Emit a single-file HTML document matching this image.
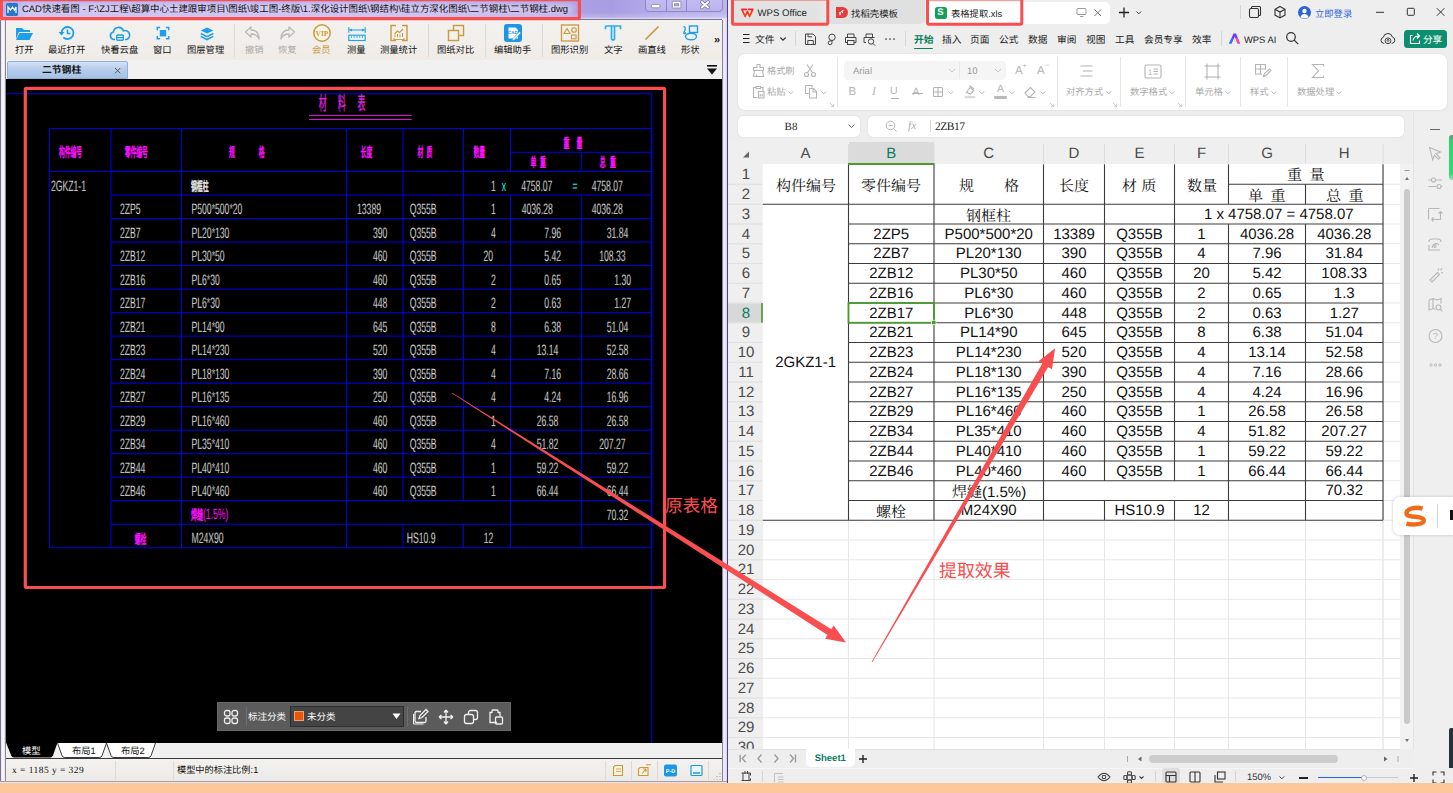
<!DOCTYPE html>
<html lang="zh"><head><meta charset="utf-8"><title>CAD table extraction</title>
<style>
html,body{margin:0;padding:0;overflow:hidden;}
html{width:1453px;height:793px;}
body{text-rendering:geometricPrecision;width:1453px;height:793px;overflow:hidden;position:relative;background:#eee;font-family:"Liberation Sans",sans-serif;}
body div,body svg{position:absolute;}
svg{overflow:visible;}
.t{white-space:nowrap;overflow:visible;}
.cj{font-family:"Liberation Sans","Noto Sans CJK SC",sans-serif;}
.cs{font-family:"Liberation Sans","Noto Serif CJK SC",serif;}
</style></head>
<body>
<div style="left:0px;top:0px;width:728px;height:783px;background:#f1f0f6;"></div>
<div style="left:0px;top:0px;width:728px;height:20px;background:linear-gradient(to right,#b9b1ee,#b7aeed 60%,#a99de2 84%,#b7aeec 92%,#bdb5f0);"></div>
<div style="left:0px;top:12px;width:728px;height:8px;background:linear-gradient(rgba(255,255,255,0),rgba(255,255,255,.18) 60%,rgba(255,255,255,.75));"></div>
<div style="left:18px;top:4px;width:556px;height:11px;background:rgba(255,240,246,.42);filter:blur(3px);border-radius:6px;"></div>
<div style="left:0px;top:20px;width:6px;height:763px;background:linear-gradient(to right,#77767c 0,#77767c 0.9px,#e6e1fa 1.2px,#f6f3ff 2.500px,#fbf9ff 4px,#dcd9e6 4.800px,#8a8990 5.300px,#8a8990 6px);"></div>
<div style="left:721.8px;top:20px;width:6.2px;height:763px;background:linear-gradient(to right,#8a8990 0,#8a8990 .8px,#e4def8 1.300px,#f1edfd 2.800px,#dcd5f4 4.600px,#4a4a68 5.300px,#4a4a68 6.200px);"></div>
<div style="left:6px;top:19.3px;width:715.8px;height:0.8px;background:#7d7b8c;"></div>
<svg style="left:6px;top:3px;" width="12" height="13"><rect x="0" y="0" width="12" height="13" rx="1.5" fill="#2a78c8"/><path d="M2 10V4l2.5 3 2-3 2 3 1.5-3v6" stroke="#fff" stroke-width="1.2" fill="none"/></svg>
<svg class="g" style="left:22px;top:-1.3px;" width="546.01" height="19" role="img"><title>CAD快速看图 - F:\ZJ工程\超算中心土建跟审项目\图纸\竣工图-终版\1.深化设计图纸\钢结构\硅立方深化图纸\二节钢柱\二节钢柱.dwg</title><g fill="#111"><text class="cj" x="19.95" y="12.77" font-size="9.45">快速看图</text><text class="cj" x="87.67" y="12.77" font-size="9.45">工程</text><text class="cj" x="109.19" y="12.77" font-size="9.45">超算中心土建跟审项目</text><text class="cj" x="206.32" y="12.77" font-size="9.45">图纸</text><text class="cj" x="227.85" y="12.77" font-size="9.45">竣工图</text><text class="cj" x="259.35" y="12.77" font-size="9.45">终版</text><text class="cj" x="288.75" y="12.77" font-size="9.45">深化设计图纸</text><text class="cj" x="348.07" y="12.77" font-size="9.45">钢结构</text><text class="cj" x="379.05" y="12.77" font-size="9.45">硅立方深化图纸</text><text class="cj" x="447.83" y="12.77" font-size="9.45">二节钢柱</text><text class="cj" x="488.25" y="12.77" font-size="9.45">二节钢柱</text><text x="0" y="12.77" font-size="9.45">CAD</text><text x="60.38" y="12.77" font-size="9.45">-</text><text x="66.15" y="12.77" font-size="9.45">F:\ZJ</text><text x="106.57" y="12.77" font-size="9.45">\</text><text x="203.7" y="12.77" font-size="9.45">\</text><text x="225.22" y="12.77" font-size="9.45">\</text><text x="256.2" y="12.77" font-size="9.45">-</text><text x="278.24" y="12.77" font-size="9.45">\1.</text><text x="345.45" y="12.77" font-size="9.45">\</text><text x="376.43" y="12.77" font-size="9.45">\</text><text x="445.2" y="12.77" font-size="9.45">\</text><text x="485.63" y="12.77" font-size="9.45">\</text><text x="526.05" y="12.77" font-size="9.45">.dwg</text></g></svg>
<div style="left:644.6px;top:-3px;width:78px;height:14.8px;border:1px solid #8f88bf;border-radius:0 0 4px 4px;background:linear-gradient(#c3bcf2,#bbb3ef);box-sizing:border-box;"></div>
<div style="left:666.3px;top:0px;width:0.8px;height:11px;background:#8f88bf;"></div>
<div style="left:686px;top:0px;width:0.8px;height:11px;background:#8f88bf;"></div>
<svg style="left:645px;top:0px;" width="78" height="12"><rect x="6.500" y="4.500" width="8.500" height="3.300" rx="1.300" fill="#fff" stroke="#77739a" stroke-width=".7"/><rect x="27.300" y="1.300" width="8.600" height="6.700" rx=".6" fill="#fff" stroke="#77739a" stroke-width=".7"/><rect x="29.400" y="3.700" width="4.400" height="2.200" fill="#b4abea" stroke="#77739a" stroke-width=".6"/><path d="M56.800 2l6.300 5.600M63.100 2l-6.300 5.600" stroke="#6d698f" stroke-width="3.300" stroke-linecap="round"/><path d="M56.800 2l6.300 5.600M63.100 2l-6.300 5.600" stroke="#fff" stroke-width="2" stroke-linecap="round"/></svg>
<div style="left:6px;top:20px;width:715.8px;height:40px;background:linear-gradient(#f3f1ee,#efece8);"></div>
<svg style="left:12.0px;top:24px;" width="24" height="18"><path d="M4 4h6l2 2h6v2H7l-3 7z" fill="#1e9fe9"/><path d="M7.5 9H21l-3.5 7H4z" fill="#1e9fe9"/></svg>
<svg class="g" style="left:14.7px;top:42.9px;" width="18.6" height="14" role="img"><title>打开</title><g fill="#111"><text class="cj" x="0" y="10.22" font-size="9.3">打开</text></g></svg>
<svg style="left:55.0px;top:24px;" width="24" height="18"><path d="M6.5 9a6 6 0 1 1 1.8 4.3" fill="none" stroke="#1e9fe9" stroke-width="1.8"/><path d="M3.5 8l3 3.4 3-3.4z" fill="#1e9fe9"/><path d="M12.5 5.5V9.5h3" fill="none" stroke="#1e9fe9" stroke-width="1.6"/></svg>
<svg class="g" style="left:48.4px;top:42.9px;" width="37.2" height="14" role="img"><title>最近打开</title><g fill="#111"><text class="cj" x="0" y="10.22" font-size="9.3">最近打开</text></g></svg>
<svg style="left:107.5px;top:24px;" width="24" height="18"><path d="M7 15.5H6a3.8 3.8 0 0 1-.6-7.5 5.2 5.2 0 0 1 10-1.2A4.3 4.3 0 0 1 18.6 15.5H17" fill="none" stroke="#1e9fe9" stroke-width="1.7"/><rect x="8.7" y="11" width="6.6" height="5.2" rx="1" fill="none" stroke="#1e9fe9" stroke-width="1.4"/><path d="M9 13.6h6" stroke="#1e9fe9" stroke-width="1.2"/></svg>
<svg class="g" style="left:100.9px;top:42.9px;" width="37.2" height="14" role="img"><title>快看云盘</title><g fill="#111"><text class="cj" x="0" y="10.22" font-size="9.3">快看云盘</text></g></svg>
<svg style="left:151.2px;top:24px;" width="24" height="18"><rect x="8.800" y="6" width="6.400" height="6.400" fill="#1e9fe9"/><path d="M6.300 6.300V3.600h2.800M14.900 3.600h2.800v2.700M17.700 12v2.700h-2.800M9.100 14.700H6.300V12" fill="none" stroke="#1e9fe9" stroke-width="1.500"/></svg>
<svg class="g" style="left:153.2px;top:42.9px;" width="18.6" height="14" role="img"><title>窗口</title><g fill="#111"><text class="cj" x="0" y="10.22" font-size="9.3">窗口</text></g></svg>
<svg style="left:194.5px;top:24px;" width="24" height="18"><path d="M12 3.400l6.300 3.100-6.300 3.100-6.300-3.100z" fill="#1e9fe9"/><path d="M5.700 9.500l6.300 3.100 6.300-3.100M5.700 12.400l6.300 3.100 6.300-3.100" fill="none" stroke="#1e9fe9" stroke-width="1.600"/></svg>
<svg class="g" style="left:187.4px;top:42.9px;" width="37.2" height="14" role="img"><title>图层管理</title><g fill="#111"><text class="cj" x="0" y="10.22" font-size="9.3">图层管理</text></g></svg>
<div style="left:234px;top:24px;width:1px;height:33px;background:#dcd8d2;"></div>
<svg style="left:241.0px;top:24px;" width="24" height="18"><path d="M10 3L4.500 8l5.500 5v-3c4 0 6.500 1 8 5 0-6-3-9-8-9z" fill="none" stroke="#b9b9b9" stroke-width="1.300" stroke-linejoin="round"/></svg>
<svg class="g" style="left:244.5px;top:42.9px;" width="18.6" height="14" role="img"><title>撤销</title><g fill="#a9a9a9"><text class="cj" x="0" y="10.22" font-size="9.3">撤销</text></g></svg>
<svg style="left:275.0px;top:24px;" width="24" height="18"><path d="M14 3l5.500 5-5.500 5v-3c-4 0-6.500 1-8 5 0-6 3-9 8-9z" fill="none" stroke="#b9b9b9" stroke-width="1.300" stroke-linejoin="round"/></svg>
<svg class="g" style="left:278.4px;top:42.9px;" width="18.6" height="14" role="img"><title>恢复</title><g fill="#a9a9a9"><text class="cj" x="0" y="10.22" font-size="9.3">恢复</text></g></svg>
<svg style="left:309.5px;top:24px;" width="24" height="18"><circle cx="12" cy="9" r="8.200" fill="#fdf6e6" stroke="#c99a3c" stroke-width="1.500"/><text x="12" y="12" font-size="7.500" font-weight="bold" text-anchor="middle" fill="#c99a3c" font-family="Liberation Serif,serif">VIP</text></svg>
<svg class="g" style="left:312.2px;top:42.9px;" width="18.6" height="14" role="img"><title>会员</title><g fill="#c99a3c"><text class="cj" x="0" y="10.22" font-size="9.3">会员</text></g></svg>
<svg style="left:344.5px;top:24px;" width="24" height="18"><path d="M3.800 3.300v5.400M20.200 3.300v5.400M4.500 6h15" stroke="#1e9fe9" stroke-width="1.100" fill="none"/><path d="M7 4.400L4.300 6 7 7.600zM17 4.400L19.700 6 17 7.600z" fill="#1e9fe9"/><rect x="3.800" y="11.200" width="16.400" height="5.300" fill="#e4f3fd" stroke="#1e9fe9" stroke-width="1.100"/><path d="M6.500 11.500v2.400M9.200 11.500v2.400M12 11.500v2.400M14.800 11.500v2.400M17.500 11.500v2.400" stroke="#1e9fe9" stroke-width=".8"/></svg>
<svg class="g" style="left:346.7px;top:42.9px;" width="18.6" height="14" role="img"><title>测量</title><g fill="#111"><text class="cj" x="0" y="10.22" font-size="9.3">测量</text></g></svg>
<svg style="left:387.0px;top:24px;" width="24" height="18"><path d="M9 1.500H4v15h5M15 1.500h5v15h-5" fill="none" stroke="#c99a3c" stroke-width="1.400"/><path d="M7.500 10l3-3 2 1.500 3.500-3.500" fill="none" stroke="#c99a3c" stroke-width="1.100"/><path d="M8 11v2M10.500 10v3M13 10.500v2.500M15.500 9v4" stroke="#c99a3c" stroke-width="1"/><path d="M7 15.500h10M7 14v3M17 14v3" stroke="#c99a3c" stroke-width=".9"/></svg>
<svg class="g" style="left:380.4px;top:42.9px;" width="37.2" height="14" role="img"><title>测量统计</title><g fill="#111"><text class="cj" x="0" y="10.22" font-size="9.3">测量统计</text></g></svg>
<div style="left:428px;top:24px;width:1px;height:33px;background:#dcd8d2;"></div>
<svg style="left:444.0px;top:24px;" width="24" height="18"><rect x="9.500" y="1.500" width="10" height="10" fill="none" stroke="#c99a3c" stroke-width="1.400"/><rect x="4.500" y="6.500" width="10" height="10" fill="#f3f1ee" stroke="#c99a3c" stroke-width="1.400"/></svg>
<svg class="g" style="left:437.4px;top:42.9px;" width="37.2" height="14" role="img"><title>图纸对比</title><g fill="#111"><text class="cj" x="0" y="10.22" font-size="9.3">图纸对比</text></g></svg>
<div style="left:485px;top:24px;width:1px;height:33px;background:#dcd8d2;"></div>
<svg style="left:501.0px;top:24px;" width="24" height="18"><rect x="3" y="0" width="18" height="18" rx="3" fill="#1e96e4"/><path d="M7.500 3.500h7l2.500 2.500v8.500h-9.500z" fill="#fff"/><text x="11.800" y="9.500" font-size="4.500" font-weight="bold" text-anchor="middle" fill="#1e96e4" font-family="Liberation Sans,sans-serif">CAD</text><path d="M12 14.500l6.500-7 1.500 1.500-6.500 7-2.200.600z" fill="#fff" stroke="#1e96e4" stroke-width=".6"/></svg>
<svg class="g" style="left:494.4px;top:42.9px;" width="37.2" height="14" role="img"><title>编辑助手</title><g fill="#111"><text class="cj" x="0" y="10.22" font-size="9.3">编辑助手</text></g></svg>
<div style="left:542px;top:24px;width:1px;height:33px;background:#dcd8d2;"></div>
<svg style="left:558.0px;top:24px;" width="24" height="18"><rect x="3.500" y="1" width="17" height="16" fill="none" stroke="#c99a3c" stroke-width="1.300"/><path d="M9 4.500l3 5h-6z" fill="none" stroke="#c99a3c" stroke-width="1.100"/><circle cx="16" cy="6" r="2.300" fill="none" stroke="#c99a3c" stroke-width="1.100"/><rect x="13.500" y="11" width="4.500" height="3.800" fill="none" stroke="#c99a3c" stroke-width="1.100"/></svg>
<svg class="g" style="left:551.4px;top:42.9px;" width="37.2" height="14" role="img"><title>图形识别</title><g fill="#111"><text class="cj" x="0" y="10.22" font-size="9.3">图形识别</text></g></svg>
<svg style="left:601.0px;top:24px;" width="24" height="18"><path d="M4.500 2h15v3.200M4.500 2v3.200M10.500 2.300v13.500M13.500 2.300v13.500M10.500 15.800h3" fill="none" stroke="#29aef0" stroke-width="1.700"/></svg>
<svg class="g" style="left:603.7px;top:42.9px;" width="18.6" height="14" role="img"><title>文字</title><g fill="#111"><text class="cj" x="0" y="10.22" font-size="9.3">文字</text></g></svg>
<svg style="left:639.5px;top:24px;" width="24" height="18"><path d="M5.500 15.500L18.500 2.500" stroke="#c99a3c" stroke-width="1.700"/></svg>
<svg class="g" style="left:637.55px;top:42.9px;" width="27.9" height="14" role="img"><title>画直线</title><g fill="#111"><text class="cj" x="0" y="10.22" font-size="9.3">画直线</text></g></svg>
<svg style="left:678.5px;top:24px;" width="24" height="18"><rect x="10.500" y="2" width="8" height="6.500" fill="none" stroke="#1e9fe9" stroke-width="1.400"/><ellipse cx="12" cy="12.500" rx="5.500" ry="3.300" fill="none" stroke="#1e9fe9" stroke-width="1.400"/><path d="M4.500 2.500c2.500 0 2 3.500.5 5.500-1 1.300.5 2.500 2 .5" fill="none" stroke="#1e9fe9" stroke-width="1.300"/></svg>
<svg class="g" style="left:681.2px;top:42.9px;" width="18.6" height="14" role="img"><title>形状</title><g fill="#111"><text class="cj" x="0" y="10.22" font-size="9.3">形状</text></g></svg>
<div class="t" style="left:711px;top:33px;width:12px;height:14px;line-height:14px;font-size:11px;color:#222;text-align:center;font-weight:bold;">»</div>
<div style="left:6px;top:60px;width:715.8px;height:19px;background:#f1f1f1;"></div>
<div style="left:7px;top:61px;width:121px;height:17.5px;background:linear-gradient(#d3e2f6,#b7cdea 45%,#a4c0e6);border:1px solid #8fb0da;box-sizing:border-box;border-radius:2px 2px 0 0;"></div>
<svg class="g" style="left:42.4px;top:61px;" width="39.2" height="17" role="img"><title>二节钢柱</title><g fill="#111"><text class="cj" x="0" y="11.9" font-size="9.8" font-weight="bold">二节钢柱</text></g></svg>
<svg style="left:114px;top:66.5px;" width="8" height="8"><path d="M1 1l5.300 5.300M6.300 1l-5.300 5.300" stroke="#555" stroke-width="1"/></svg>
<svg style="left:706px;top:65px;" width="12" height="10"><path d="M1 .8h10" stroke="#111" stroke-width="1.600"/><path d="M1 3.500h10l-5 6z" fill="#111"/></svg>
<div style="left:6px;top:79px;width:715.8px;height:664px;background:#000;"></div>
<svg style="left:7px;top:79px;" width="715" height="664" viewBox="7 79 715 664" font-family="Liberation Sans,sans-serif"><g stroke="#000" stroke-width=".3"><path d="M7 93.75H651.8M651.8 93.75V743.00M49.5 128.50H651.8M49.5 171.50H651.8M510.5 152.30H651.8M49.5 128.50V547.76M651.8 128.50V547.76M49.5 547.76H651.8M111 195.02H651.8M111 218.53H651.8M111 242.05H651.8M111 265.56H651.8M111 289.08H651.8M111 312.60H651.8M111 336.11H651.8M111 359.63H651.8M111 383.14H651.8M111 406.66H651.8M111 430.18H651.8M111 453.69H651.8M111 477.21H651.8M111 500.72H651.8M111 524.24H651.8M111 128.50V547.76M181.5 128.50V547.76M346.5 128.50V547.76M403 128.50V500.72M403 524.24V547.76M463.5 128.50V500.72M463.5 524.24V547.76M510.5 128.50V171.50M510.5 195.02V547.76M581.7 152.30V171.50M581.7 195.02V547.76" stroke="#0000ea" stroke-width="1" fill="none"/>
<path d="M309 115.500H411.700M309 119.500H411.700" stroke="#e010e0" stroke-width="1.100"/>
<text class="cj" transform="translate(322.7,109.5) scale(0.42,1)" font-size="19" fill="#ee22ee" stroke="#ee22ee" stroke-width=".23" text-anchor="middle">材</text>
<text class="cj" transform="translate(341.7,109.5) scale(0.42,1)" font-size="19" fill="#ee22ee" stroke="#ee22ee" stroke-width=".23" text-anchor="middle">料</text>
<text class="cj" transform="translate(361.5,109.5) scale(0.42,1)" font-size="19" fill="#ee22ee" stroke="#ee22ee" stroke-width=".23" text-anchor="middle">表</text>
<text class="cj" transform="translate(70.5,157.3) scale(0.4304,1)" font-size="13.5" fill="#ff10ff" stroke="#ff10ff" stroke-width=".6" text-anchor="middle">构件编号</text>
<text class="cj" transform="translate(136.3,157.3) scale(0.4304,1)" font-size="13.5" fill="#ff10ff" stroke="#ff10ff" stroke-width=".6" text-anchor="middle">零件编号</text>
<text class="cj" transform="translate(232,157.3) scale(0.4304,1)" font-size="13.5" fill="#ff10ff" stroke="#ff10ff" stroke-width=".6" text-anchor="middle">规</text>
<text class="cj" transform="translate(261.7,157.3) scale(0.4304,1)" font-size="13.5" fill="#ff10ff" stroke="#ff10ff" stroke-width=".6" text-anchor="middle">格</text>
<text class="cj" transform="translate(366.4,157.3) scale(0.4304,1)" font-size="13.5" fill="#ff10ff" stroke="#ff10ff" stroke-width=".6" text-anchor="middle">长度</text>
<text class="cj" transform="translate(420.5,157.3) scale(0.4304,1)" font-size="13.5" fill="#ff10ff" stroke="#ff10ff" stroke-width=".6" text-anchor="middle">材</text>
<text class="cj" transform="translate(429.5,157.3) scale(0.4304,1)" font-size="13.5" fill="#ff10ff" stroke="#ff10ff" stroke-width=".6" text-anchor="middle">质</text>
<text class="cj" transform="translate(479.3,157.3) scale(0.4304,1)" font-size="13.5" fill="#ff10ff" stroke="#ff10ff" stroke-width=".6" text-anchor="middle">数量</text>
<text class="cj" transform="translate(566.5,148.3) scale(0.4304,1)" font-size="13.5" fill="#ff10ff" stroke="#ff10ff" stroke-width=".6" text-anchor="middle">重</text>
<text class="cj" transform="translate(579.5,148.3) scale(0.4304,1)" font-size="13.5" fill="#ff10ff" stroke="#ff10ff" stroke-width=".6" text-anchor="middle">量</text>
<text class="cj" transform="translate(533.5,166.8) scale(0.4304,1)" font-size="13.5" fill="#ff10ff" stroke="#ff10ff" stroke-width=".6" text-anchor="middle">单</text>
<text class="cj" transform="translate(543,166.8) scale(0.4304,1)" font-size="13.5" fill="#ff10ff" stroke="#ff10ff" stroke-width=".6" text-anchor="middle">重</text>
<text class="cj" transform="translate(602.7,166.8) scale(0.4304,1)" font-size="13.5" fill="#ff10ff" stroke="#ff10ff" stroke-width=".6" text-anchor="middle">总</text>
<text class="cj" transform="translate(613,166.8) scale(0.4304,1)" font-size="13.5" fill="#ff10ff" stroke="#ff10ff" stroke-width=".6" text-anchor="middle">重</text>
<text transform="translate(51,190.56) scale(0.575,1)" font-size="15" fill="#ffffff" text-anchor="start">2GKZ1-1</text>
<text class="cj" transform="translate(191,190.56) scale(0.45,1)" font-size="13" fill="#eee" stroke="#eee" stroke-width=".58" text-anchor="start">钢框柱</text>
<text transform="translate(491,190.56) scale(0.575,1)" font-size="15" fill="#ffffff" text-anchor="start">1</text>
<text transform="translate(501.7,190.56) scale(0.575,1)" font-size="15" fill="#18f2f2" stroke="none" text-anchor="start">x</text>
<text transform="translate(521.2,190.56) scale(0.575,1)" font-size="15" fill="#ffffff" text-anchor="start">4758.07</text>
<text transform="translate(572.5,190.56) scale(0.575,1)" font-size="15" fill="#18f2f2" stroke="none" text-anchor="start">=</text>
<text transform="translate(591.7,190.56) scale(0.575,1)" font-size="15" fill="#ffffff" text-anchor="start">4758.07</text>
<text transform="translate(120,214.07) scale(0.575,1)" font-size="15" fill="#ffffff" text-anchor="start">2ZP5</text>
<text transform="translate(191.5,214.07) scale(0.575,1)" font-size="15" fill="#ffffff" text-anchor="start">P500*500*20</text>
<text transform="translate(357,214.07) scale(0.575,1)" font-size="15" fill="#ffffff" text-anchor="start">13389</text>
<text transform="translate(409.7,214.07) scale(0.575,1)" font-size="15" fill="#ffffff" text-anchor="start">Q355B</text>
<text transform="translate(491.0,214.07) scale(0.575,1)" font-size="15" fill="#ffffff" text-anchor="start">1</text>
<text transform="translate(521.7,214.07) scale(0.575,1)" font-size="15" fill="#ffffff" text-anchor="start">4036.28</text>
<text transform="translate(591.7,214.07) scale(0.575,1)" font-size="15" fill="#ffffff" text-anchor="start">4036.28</text>
<text transform="translate(120,237.59) scale(0.575,1)" font-size="15" fill="#ffffff" text-anchor="start">2ZB7</text>
<text transform="translate(191.5,237.59) scale(0.575,1)" font-size="15" fill="#ffffff" text-anchor="start">PL20*130</text>
<text transform="translate(373,237.59) scale(0.575,1)" font-size="15" fill="#ffffff" text-anchor="start">390</text>
<text transform="translate(409.7,237.59) scale(0.575,1)" font-size="15" fill="#ffffff" text-anchor="start">Q355B</text>
<text transform="translate(491.0,237.59) scale(0.575,1)" font-size="15" fill="#ffffff" text-anchor="start">4</text>
<text transform="translate(544.2,237.59) scale(0.575,1)" font-size="15" fill="#ffffff" text-anchor="start">7.96</text>
<text transform="translate(606.7,237.59) scale(0.575,1)" font-size="15" fill="#ffffff" text-anchor="start">31.84</text>
<text transform="translate(120,261.11) scale(0.575,1)" font-size="15" fill="#ffffff" text-anchor="start">2ZB12</text>
<text transform="translate(191.5,261.11) scale(0.575,1)" font-size="15" fill="#ffffff" text-anchor="start">PL30*50</text>
<text transform="translate(373,261.11) scale(0.575,1)" font-size="15" fill="#ffffff" text-anchor="start">460</text>
<text transform="translate(409.7,261.11) scale(0.575,1)" font-size="15" fill="#ffffff" text-anchor="start">Q355B</text>
<text transform="translate(483.5,261.11) scale(0.575,1)" font-size="15" fill="#ffffff" text-anchor="start">20</text>
<text transform="translate(544.2,261.11) scale(0.575,1)" font-size="15" fill="#ffffff" text-anchor="start">5.42</text>
<text transform="translate(599.2,261.11) scale(0.575,1)" font-size="15" fill="#ffffff" text-anchor="start">108.33</text>
<text transform="translate(120,284.62) scale(0.575,1)" font-size="15" fill="#ffffff" text-anchor="start">2ZB16</text>
<text transform="translate(191.5,284.62) scale(0.575,1)" font-size="15" fill="#ffffff" text-anchor="start">PL6*30</text>
<text transform="translate(373,284.62) scale(0.575,1)" font-size="15" fill="#ffffff" text-anchor="start">460</text>
<text transform="translate(409.7,284.62) scale(0.575,1)" font-size="15" fill="#ffffff" text-anchor="start">Q355B</text>
<text transform="translate(491.0,284.62) scale(0.575,1)" font-size="15" fill="#ffffff" text-anchor="start">2</text>
<text transform="translate(544.2,284.62) scale(0.575,1)" font-size="15" fill="#ffffff" text-anchor="start">0.65</text>
<text transform="translate(614.2,284.62) scale(0.575,1)" font-size="15" fill="#ffffff" text-anchor="start">1.30</text>
<text transform="translate(120,308.14) scale(0.575,1)" font-size="15" fill="#ffffff" text-anchor="start">2ZB17</text>
<text transform="translate(191.5,308.14) scale(0.575,1)" font-size="15" fill="#ffffff" text-anchor="start">PL6*30</text>
<text transform="translate(373,308.14) scale(0.575,1)" font-size="15" fill="#ffffff" text-anchor="start">448</text>
<text transform="translate(409.7,308.14) scale(0.575,1)" font-size="15" fill="#ffffff" text-anchor="start">Q355B</text>
<text transform="translate(491.0,308.14) scale(0.575,1)" font-size="15" fill="#ffffff" text-anchor="start">2</text>
<text transform="translate(544.2,308.14) scale(0.575,1)" font-size="15" fill="#ffffff" text-anchor="start">0.63</text>
<text transform="translate(614.2,308.14) scale(0.575,1)" font-size="15" fill="#ffffff" text-anchor="start">1.27</text>
<text transform="translate(120,331.65) scale(0.575,1)" font-size="15" fill="#ffffff" text-anchor="start">2ZB21</text>
<text transform="translate(191.5,331.65) scale(0.575,1)" font-size="15" fill="#ffffff" text-anchor="start">PL14*90</text>
<text transform="translate(373,331.65) scale(0.575,1)" font-size="15" fill="#ffffff" text-anchor="start">645</text>
<text transform="translate(409.7,331.65) scale(0.575,1)" font-size="15" fill="#ffffff" text-anchor="start">Q355B</text>
<text transform="translate(491.0,331.65) scale(0.575,1)" font-size="15" fill="#ffffff" text-anchor="start">8</text>
<text transform="translate(544.2,331.65) scale(0.575,1)" font-size="15" fill="#ffffff" text-anchor="start">6.38</text>
<text transform="translate(606.7,331.65) scale(0.575,1)" font-size="15" fill="#ffffff" text-anchor="start">51.04</text>
<text transform="translate(120,355.17) scale(0.575,1)" font-size="15" fill="#ffffff" text-anchor="start">2ZB23</text>
<text transform="translate(191.5,355.17) scale(0.575,1)" font-size="15" fill="#ffffff" text-anchor="start">PL14*230</text>
<text transform="translate(373,355.17) scale(0.575,1)" font-size="15" fill="#ffffff" text-anchor="start">520</text>
<text transform="translate(409.7,355.17) scale(0.575,1)" font-size="15" fill="#ffffff" text-anchor="start">Q355B</text>
<text transform="translate(491.0,355.17) scale(0.575,1)" font-size="15" fill="#ffffff" text-anchor="start">4</text>
<text transform="translate(536.7,355.17) scale(0.575,1)" font-size="15" fill="#ffffff" text-anchor="start">13.14</text>
<text transform="translate(606.7,355.17) scale(0.575,1)" font-size="15" fill="#ffffff" text-anchor="start">52.58</text>
<text transform="translate(120,378.69) scale(0.575,1)" font-size="15" fill="#ffffff" text-anchor="start">2ZB24</text>
<text transform="translate(191.5,378.69) scale(0.575,1)" font-size="15" fill="#ffffff" text-anchor="start">PL18*130</text>
<text transform="translate(373,378.69) scale(0.575,1)" font-size="15" fill="#ffffff" text-anchor="start">390</text>
<text transform="translate(409.7,378.69) scale(0.575,1)" font-size="15" fill="#ffffff" text-anchor="start">Q355B</text>
<text transform="translate(491.0,378.69) scale(0.575,1)" font-size="15" fill="#ffffff" text-anchor="start">4</text>
<text transform="translate(544.2,378.69) scale(0.575,1)" font-size="15" fill="#ffffff" text-anchor="start">7.16</text>
<text transform="translate(606.7,378.69) scale(0.575,1)" font-size="15" fill="#ffffff" text-anchor="start">28.66</text>
<text transform="translate(120,402.2) scale(0.575,1)" font-size="15" fill="#ffffff" text-anchor="start">2ZB27</text>
<text transform="translate(191.5,402.2) scale(0.575,1)" font-size="15" fill="#ffffff" text-anchor="start">PL16*135</text>
<text transform="translate(373,402.2) scale(0.575,1)" font-size="15" fill="#ffffff" text-anchor="start">250</text>
<text transform="translate(409.7,402.2) scale(0.575,1)" font-size="15" fill="#ffffff" text-anchor="start">Q355B</text>
<text transform="translate(491.0,402.2) scale(0.575,1)" font-size="15" fill="#ffffff" text-anchor="start">4</text>
<text transform="translate(544.2,402.2) scale(0.575,1)" font-size="15" fill="#ffffff" text-anchor="start">4.24</text>
<text transform="translate(606.7,402.2) scale(0.575,1)" font-size="15" fill="#ffffff" text-anchor="start">16.96</text>
<text transform="translate(120,425.72) scale(0.575,1)" font-size="15" fill="#ffffff" text-anchor="start">2ZB29</text>
<text transform="translate(191.5,425.72) scale(0.575,1)" font-size="15" fill="#ffffff" text-anchor="start">PL16*460</text>
<text transform="translate(373,425.72) scale(0.575,1)" font-size="15" fill="#ffffff" text-anchor="start">460</text>
<text transform="translate(409.7,425.72) scale(0.575,1)" font-size="15" fill="#ffffff" text-anchor="start">Q355B</text>
<text transform="translate(491.0,425.72) scale(0.575,1)" font-size="15" fill="#ffffff" text-anchor="start">1</text>
<text transform="translate(536.7,425.72) scale(0.575,1)" font-size="15" fill="#ffffff" text-anchor="start">26.58</text>
<text transform="translate(606.7,425.72) scale(0.575,1)" font-size="15" fill="#ffffff" text-anchor="start">26.58</text>
<text transform="translate(120,449.23) scale(0.575,1)" font-size="15" fill="#ffffff" text-anchor="start">2ZB34</text>
<text transform="translate(191.5,449.23) scale(0.575,1)" font-size="15" fill="#ffffff" text-anchor="start">PL35*410</text>
<text transform="translate(373,449.23) scale(0.575,1)" font-size="15" fill="#ffffff" text-anchor="start">460</text>
<text transform="translate(409.7,449.23) scale(0.575,1)" font-size="15" fill="#ffffff" text-anchor="start">Q355B</text>
<text transform="translate(491.0,449.23) scale(0.575,1)" font-size="15" fill="#ffffff" text-anchor="start">4</text>
<text transform="translate(536.7,449.23) scale(0.575,1)" font-size="15" fill="#ffffff" text-anchor="start">51.82</text>
<text transform="translate(599.2,449.23) scale(0.575,1)" font-size="15" fill="#ffffff" text-anchor="start">207.27</text>
<text transform="translate(120,472.75) scale(0.575,1)" font-size="15" fill="#ffffff" text-anchor="start">2ZB44</text>
<text transform="translate(191.5,472.75) scale(0.575,1)" font-size="15" fill="#ffffff" text-anchor="start">PL40*410</text>
<text transform="translate(373,472.75) scale(0.575,1)" font-size="15" fill="#ffffff" text-anchor="start">460</text>
<text transform="translate(409.7,472.75) scale(0.575,1)" font-size="15" fill="#ffffff" text-anchor="start">Q355B</text>
<text transform="translate(491.0,472.75) scale(0.575,1)" font-size="15" fill="#ffffff" text-anchor="start">1</text>
<text transform="translate(536.7,472.75) scale(0.575,1)" font-size="15" fill="#ffffff" text-anchor="start">59.22</text>
<text transform="translate(606.7,472.75) scale(0.575,1)" font-size="15" fill="#ffffff" text-anchor="start">59.22</text>
<text transform="translate(120,496.27) scale(0.575,1)" font-size="15" fill="#ffffff" text-anchor="start">2ZB46</text>
<text transform="translate(191.5,496.27) scale(0.575,1)" font-size="15" fill="#ffffff" text-anchor="start">PL40*460</text>
<text transform="translate(373,496.27) scale(0.575,1)" font-size="15" fill="#ffffff" text-anchor="start">460</text>
<text transform="translate(409.7,496.27) scale(0.575,1)" font-size="15" fill="#ffffff" text-anchor="start">Q355B</text>
<text transform="translate(491.0,496.27) scale(0.575,1)" font-size="15" fill="#ffffff" text-anchor="start">1</text>
<text transform="translate(536.7,496.27) scale(0.575,1)" font-size="15" fill="#ffffff" text-anchor="start">66.44</text>
<text transform="translate(606.7,496.27) scale(0.575,1)" font-size="15" fill="#ffffff" text-anchor="start">66.44</text>
<text class="cj" transform="translate(191,520.28) scale(0.43,1)" font-size="14" fill="#ff10ff" stroke="#ff10ff" stroke-width=".6" text-anchor="start">焊缝</text>
<text transform="translate(203,519.28) scale(0.575,1)" font-size="15" fill="#ff10ff" stroke="none" text-anchor="start">(1.5%)</text>
<text transform="translate(606.7,519.78) scale(0.575,1)" font-size="15" fill="#ffffff" text-anchor="start">70.32</text>
<text class="cj" transform="translate(140.5,543.8) scale(0.4304,1)" font-size="13.5" fill="#ff10ff" stroke="#ff10ff" stroke-width=".6" text-anchor="middle">螺栓</text>
<text transform="translate(191.5,543.3) scale(0.575,1)" font-size="15" fill="#ffffff" text-anchor="start">M24X90</text>
<text transform="translate(406.7,543.3) scale(0.575,1)" font-size="15" fill="#ffffff" text-anchor="start">HS10.9</text>
<text transform="translate(483.7,543.3) scale(0.575,1)" font-size="15" fill="#ffffff" text-anchor="start">12</text></g></svg>
<div style="left:6px;top:743px;width:715.8px;height:15px;background:#f0f0f0;"></div>
<svg style="left:6px;top:742px;" width="160" height="17"><path d="M0 0.500h51.500l-4.500 13q-.7 2-2.800 2H8q-2.100 0-2.800-2z" fill="#000"/><path d="M51.500 1l4.500 12.500q.7 2 2.800 2h34.500q2.100 0 2.800-2L100.500 1" fill="#fff" stroke="#3a3a3a" stroke-width="1"/><path d="M100.500 1l4.500 12.500q.7 2 2.800 2h34.500q2.100 0 2.800-2L149.500 1" fill="#fff" stroke="#3a3a3a" stroke-width="1"/></svg>
<svg class="g" style="left:22.2px;top:743.5px;" width="18.6" height="14" role="img"><title>模型</title><g fill="#fff"><text class="cj" x="0" y="10.22" font-size="9.3">模型</text></g></svg>
<svg class="g" style="left:71.61px;top:743.5px;" width="23.77" height="14" role="img"><title>布局1</title><g fill="#111"><text class="cj" x="0" y="10.22" font-size="9.3">布局</text><text x="18.6" y="10.22" font-size="9.3">1</text></g></svg>
<svg class="g" style="left:120.61px;top:743.5px;" width="23.77" height="14" role="img"><title>布局2</title><g fill="#111"><text class="cj" x="0" y="10.22" font-size="9.3">布局</text><text x="18.6" y="10.22" font-size="9.3">2</text></g></svg>
<div style="left:6px;top:758px;width:715.8px;height:1px;background:#3a3a3a;"></div>
<div style="left:6px;top:759px;width:715.8px;height:22px;background:linear-gradient(#f3f2f0,#eceae7);"></div>
<div style="left:0px;top:780.8px;width:727px;height:1px;background:#a3a1a8;"></div>
<div style="left:0px;top:781.8px;width:727px;height:1.2px;background:#e6e2f3;"></div>
<div class="t" style="left:12px;top:764.3px;width:90px;height:14px;line-height:14px;font-size:9.5px;color:#111;text-align:left;font-family:'Liberation Serif',serif;letter-spacing:.45px;">x = 1185 y = 329</div>
<div style="left:115px;top:761px;width:1px;height:19px;background:#dddad6;"></div>
<div style="left:173px;top:761px;width:1px;height:19px;background:#dddad6;"></div>
<svg class="g" style="left:177px;top:763px;" width="81.27" height="14" role="img"><title>模型中的标注比例:1</title><g fill="#111"><text class="cj" x="0" y="10.19" font-size="9.2">模型中的标注比例</text><text x="73.6" y="10.19" font-size="9.2">:1</text></g></svg>
<div style="left:604.5px;top:761px;width:1px;height:19px;background:#dddad6;"></div>
<div style="left:630.5px;top:761px;width:1px;height:19px;background:#dddad6;"></div>
<div style="left:656.5px;top:761px;width:1px;height:19px;background:#dddad6;"></div>
<div style="left:708px;top:761px;width:1px;height:19px;background:#dddad6;"></div>
<svg style="left:612px;top:764px;" width="96" height="13"><path d="M3 1.500h7.500v10H1.500V3z" fill="#fbf3e0" stroke="#c99a3c" stroke-width="1.100"/><path d="M4 5h5M4 7.500h5" stroke="#c99a3c" stroke-width=".8"/><path d="M28 3.500h8v8h-9.500V5z" fill="#fbf3e0" stroke="#c99a3c" stroke-width="1.100"/><path d="M30 9.500l4-4.500m0 0h-3m3 0v3" stroke="#c99a3c" stroke-width="1.100" fill="none"/><path d="M34 .8h5" stroke="#c99a3c" stroke-width="1"/><rect x="52" y="0.500" width="13" height="12" rx="2" fill="#1e96e4"/><text x="58.500" y="9" font-size="5.500" font-weight="bold" text-anchor="middle" fill="#fff" font-family="Liberation Sans,sans-serif">P-D</text><rect x="79" y="1.500" width="11" height="10" rx="1" fill="#eaf5fd" stroke="#1e96e4" stroke-width="1.200"/><path d="M81 9h7" stroke="#1e96e4" stroke-width="1.500"/></svg>
<svg style="left:712px;top:771px;" width="9" height="9"><path d="M8 2v1M8 5v1M5 5v1M8 8v.5M5 8v.5M2 8v.5" stroke="#b5b1ad" stroke-width="1.500"/></svg>
<div style="left:217px;top:702px;width:293.5px;height:28.5px;background:#5b5b5b;border:1px solid #6a6a6a;box-sizing:border-box;"></div>
<svg style="left:223px;top:709px;" width="16" height="16"><g fill="none" stroke="#eee" stroke-width="1.300"><rect x="1.500" y="1.500" width="5.500" height="5.500" rx="2"/><rect x="9" y="1.500" width="5.500" height="5.500" rx="2"/><rect x="1.500" y="9" width="5.500" height="5.500" rx="2"/><rect x="9" y="9" width="5.500" height="5.500" rx="2"/></g></svg>
<div style="left:246px;top:707px;width:1px;height:19px;background:#6f6f6f;"></div>
<svg class="g" style="left:248px;top:709px;" width="38" height="15" role="img"><title>标注分类</title><g fill="#fff"><text class="cj" x="0" y="10.79" font-size="9.5">标注分类</text></g></svg>
<div style="left:289.5px;top:706px;width:114px;height:21px;background:#444;border:1px solid #2e2e2e;box-sizing:border-box;"></div>
<div style="left:294px;top:711px;width:10px;height:10px;background:#e8560c;border:1px solid #f3a070;box-sizing:border-box;"></div>
<svg class="g" style="left:307px;top:709px;" width="28.5" height="15" role="img"><title>未分类</title><g fill="#fff"><text class="cj" x="0" y="10.79" font-size="9.5">未分类</text></g></svg>
<svg style="left:392px;top:713px;" width="9" height="7"><path d="M.5 .5h8l-4 5.500z" fill="#fff"/></svg>
<div style="left:407px;top:707px;width:1px;height:19px;background:#6f6f6f;"></div>
<svg style="left:412px;top:708px;" width="94" height="18"><g fill="none" stroke="#f0f0f0" stroke-width="1.300"><path d="M9 3.500H4.500q-1.500 0-1.500 1.500v8q0 1.500 1.500 1.500h8q1.500 0 1.500-1.500V9"/><path d="M7 10.500l1-3 6-6 2 2-6 6z"/><path d="M1.500 6v10h10" stroke-width="1"/><path d="M34 2v14M27 9h14M34 2l-2 2.500M34 2l2 2.500M34 16l-2-2.500M34 16l2-2.500M27 9l2.500-2M27 9l2.500 2M41 9l-2.500-2M41 9l-2.500 2"/><rect x="56.500" y="2.500" width="9" height="9" rx="2"/><rect x="52.500" y="6.500" width="9" height="9" rx="2" fill="#5a5a5a"/><path d="M80 4.500h-2v10h7"/><path d="M80 5V3q0-1 1-1h4q1 0 1 1v2"/><path d="M86 4.500h2V8"/><rect x="83.500" y="9" width="7" height="7"  rx="1"/></g></svg>
<div style="left:728px;top:0px;width:725px;height:783px;background:#eeeeee;"></div>
<div style="left:727px;top:0px;width:1px;height:783px;background:#4b4478;"></div>
<div style="left:731px;top:0px;width:98px;height:25.5px;background:linear-gradient(to right,#e2e2e2 88%,#ececec);"></div>
<svg style="left:740.5px;top:7.5px;" width="13" height="10"><defs><linearGradient id="wg" x1="0" y1="0" x2="0" y2="1"><stop offset="0" stop-color="#ff1f2e"/><stop offset="1" stop-color="#ff4a05"/></linearGradient></defs><path d="M.9 1.300L4.100 8.500 6.400 3.300 8.600 8.500 11.800 1.300M.9 1.300H5.300M7.500 1.300H11.800" fill="none" stroke="url(#wg)" stroke-width="1.700" stroke-linejoin="round" stroke-linecap="round"/></svg>
<div class="t" style="left:757.5px;top:5.7px;width:60px;height:15px;line-height:15px;font-size:9.6px;color:#222;text-align:left;">WPS Office</div>
<div style="left:829px;top:0px;width:96.3px;height:24.3px;background:#e0e0e0;border-radius:0 0 5px 0;"></div>
<svg style="left:835px;top:6px;" width="13" height="13"><path d="M1 1h6.500a5 5 0 0 1 0 11H1z" fill="#e63c3c"/><path d="M5 9.200c0-2.500 1.200-4 3-5-0.600 1.200-.7 2.200-.5 3M5 9.200c.3-1.500-.3-2.600-1-3.200" stroke="#fff" stroke-width="1" fill="none"/></svg>
<svg class="g" style="left:851px;top:5.7px;" width="47" height="15" role="img"><title>找稻壳模板</title><g fill="#222"><text class="cj" x="0" y="10.76" font-size="9.4">找稻壳模板</text></g></svg>
<div style="left:926px;top:1.5px;width:183.5px;height:22.5px;background:#fff;border-radius:5px;"></div>
<div style="left:934.5px;top:6.5px;width:12px;height:12px;background:#12a05c;border-radius:2.500px;"></div>
<div class="t" style="left:934.5px;top:6.5px;width:12px;height:12px;line-height:12px;font-size:9.5px;color:#fff;text-align:center;font-weight:bold;">S</div>
<svg class="g" style="left:951px;top:5.7px;" width="51.15" height="15" role="img"><title>表格提取.xls</title><g fill="#222"><text class="cj" x="0" y="10.72" font-size="9.3">表格提取</text><text x="37.2" y="10.72" font-size="9.3">.xls</text></g></svg>
<svg style="left:1076px;top:7px;" width="12" height="11"><rect x="1" y="1.500" width="9" height="6" rx="1" fill="none" stroke="#999" stroke-width="1"/><path d="M4 9.500h3.500" stroke="#999" stroke-width="1"/></svg>
<svg style="left:1093px;top:7.5px;" width="10" height="10"><path d="M1.500 1.500l6.500 6.500M8 1.500l-6.500 6.500" stroke="#777" stroke-width="1"/></svg>
<svg style="left:1118px;top:6px;" width="26" height="13"><path d="M6 1.500v10M1 6.500h10" stroke="#222" stroke-width="1.300"/><path d="M18.500 5.500l2.300 2.300 2.300-2.300" stroke="#333" stroke-width="1" fill="none"/></svg>
<div style="left:1240px;top:5px;width:1px;height:14px;background:#d2d2d2;"></div>
<svg style="left:1248px;top:5px;" width="40" height="15"><g fill="none" stroke="#333" stroke-width="1.100"><rect x="1.500" y="3.500" width="9" height="9" rx="1.500"/><path d="M3.500 3.500V2.500q0-1 1-1h7q1 0 1 1v7q0 1-1 1h-1"/><path d="M32 1.500l5 2.800v5.800l-5 2.800-5-2.800V4.300z"/><path d="M27 4.300l5 2.800 5-2.800M32 7.100v5.800"/></g></svg>
<svg style="left:1298px;top:5.5px;" width="14" height="14"><circle cx="6.500" cy="6.500" r="6.500" fill="#2d62de"/><circle cx="6.500" cy="5" r="2.200" fill="#fff"/><path d="M2.500 11a4.200 4.200 0 0 1 8 0a6 6 0 0 1-8 0z" fill="#fff"/></svg>
<svg class="g" style="left:1315px;top:5.7px;" width="37.2" height="15" role="img"><title>立即登录</title><g fill="#2d62de"><text class="cj" x="0" y="10.72" font-size="9.3">立即登录</text></g></svg>
<svg style="left:1370px;top:5px;" width="80" height="15"><g fill="none" stroke="#333" stroke-width="1"><path d="M6 7.300h8"/><rect x="37.300" y="3.300" width="7" height="7" rx=".8"/><path d="M66.800 3.200l7.600 7.600M74.400 3.200l-7.600 7.600"/></g></svg>
<svg style="left:742px;top:33px;" width="10" height="11"><path d="M1 1.500h6.500M1 5.500h6.500M1 9.500h6.500" stroke="#222" stroke-width="1.100"/></svg>
<svg class="g" style="left:754.5px;top:31.7px;" width="19.6" height="15" role="img"><title>文件</title><g fill="#222"><text class="cj" x="0" y="10.9" font-size="9.8">文件</text></g></svg>
<svg style="left:779px;top:36.2px;" width="9" height="7"><path d="M1.300 1.500l2.700 2.600 2.700-2.600" stroke="#333" stroke-width="1.150" fill="none"/></svg>
<div style="left:795px;top:31px;width:1px;height:15px;background:#d6d6d6;"></div>
<svg style="left:803px;top:33px;" width="96" height="13"><g fill="none" stroke="#444" stroke-width="1"><path d="M2.500 1h7.500l2.500 2.500v8h-10z"/><path d="M4.800 11.500v-4h5.500v4M5 1v2.800h4"/><circle cx="29" cy="4.300" r="3.200"/><path d="M29 7.500v2.300a1.900 1.900 0 1 1-1.900-1.900h1.900"/><path d="M44.500 4.500v-3.500h6.500v3.500M44.500 9.500h-2v-5h10.500v5h-2"/><rect x="44.500" y="7.500" width="6.500" height="4"/><path d="M63 4.500v-3.500h6.500v3.500M63 9.500h-2v-5h10.500"/><circle cx="68" cy="8.500" r="2.700"/><path d="M70 10.500l2.200 2.200"/></g><g fill="#333"><circle cx="83" cy="6" r=".85"/><circle cx="87" cy="6" r=".85"/><circle cx="91" cy="6" r=".85"/></g></svg>
<div style="left:905px;top:31px;width:1px;height:15px;background:#d6d6d6;"></div>
<svg class="g" style="left:913.7px;top:31.7px;" width="19.6" height="15" role="img"><title>开始</title><g fill="#0a7d5e"><text class="cj" x="0" y="10.9" font-size="9.8" font-weight="bold">开始</text></g></svg>
<svg class="g" style="left:941.8px;top:31.7px;" width="19.4" height="15" role="img"><title>插入</title><g fill="#222"><text class="cj" x="0" y="10.86" font-size="9.7">插入</text></g></svg>
<svg class="g" style="left:970.3px;top:31.7px;" width="19.4" height="15" role="img"><title>页面</title><g fill="#222"><text class="cj" x="0" y="10.86" font-size="9.7">页面</text></g></svg>
<svg class="g" style="left:999.3px;top:31.7px;" width="19.4" height="15" role="img"><title>公式</title><g fill="#222"><text class="cj" x="0" y="10.86" font-size="9.7">公式</text></g></svg>
<svg class="g" style="left:1027.8px;top:31.7px;" width="19.4" height="15" role="img"><title>数据</title><g fill="#222"><text class="cj" x="0" y="10.86" font-size="9.7">数据</text></g></svg>
<svg class="g" style="left:1056.8px;top:31.7px;" width="19.4" height="15" role="img"><title>审阅</title><g fill="#222"><text class="cj" x="0" y="10.86" font-size="9.7">审阅</text></g></svg>
<svg class="g" style="left:1085.8px;top:31.7px;" width="19.4" height="15" role="img"><title>视图</title><g fill="#222"><text class="cj" x="0" y="10.86" font-size="9.7">视图</text></g></svg>
<svg class="g" style="left:1114.8px;top:31.7px;" width="19.4" height="15" role="img"><title>工具</title><g fill="#222"><text class="cj" x="0" y="10.86" font-size="9.7">工具</text></g></svg>
<svg class="g" style="left:1143.6px;top:31.7px;" width="38.8" height="15" role="img"><title>会员专享</title><g fill="#222"><text class="cj" x="0" y="10.86" font-size="9.7">会员专享</text></g></svg>
<svg class="g" style="left:1192.3px;top:31.7px;" width="19.4" height="15" role="img"><title>效率</title><g fill="#222"><text class="cj" x="0" y="10.86" font-size="9.7">效率</text></g></svg>
<div style="left:913.5px;top:47.6px;width:19.3px;height:1.6px;background:#0a7d5e;border-radius:1px;"></div>
<div style="left:1221px;top:31px;width:1px;height:15px;background:#d6d6d6;"></div>
<svg style="left:1228px;top:32px;" width="13" height="13"><path d="M1 11.500L5.500 1.500h2.500l4 10h-2.500l-2.700-7-3.300 7z" fill="#6a3df0"/><path d="M7.500 6.500l2 5h2.500l-2.500-6z" fill="#ff4d8d"/><path d="M1 11.500l2-4.500h2.300l-1.800 4.500z" fill="#2b7bff"/></svg>
<div class="t" style="left:1244px;top:31.700px;width:40px;height:15px;line-height:15px;font-size:9.4px;color:#222;text-align:left;">WPS AI</div>
<svg style="left:1285px;top:31px;" width="15" height="15"><circle cx="6" cy="6" r="4.300" fill="none" stroke="#333" stroke-width="1.200"/><path d="M9.200 9.200l4 4" stroke="#333" stroke-width="1.200"/></svg>
<svg style="left:1380px;top:31px;" width="16" height="15"><path d="M4.300 12.300h-.6a3 3 0 0 1-.4-5.900 4.700 4.700 0 0 1 9.200-.3 3.200 3.200 0 0 1-.3 6.200h-.6" fill="none" stroke="#333" stroke-width="1"/><circle cx="8" cy="9.800" r="2.900" fill="none" stroke="#333" stroke-width=".9"/><path d="M8 11.400v-3M6.700 9.500l1.300-1.300 1.300 1.300" stroke="#333" stroke-width=".9" fill="none"/></svg>
<div style="left:1404px;top:29.5px;width:42.5px;height:18px;background:#0d8f6f;border-radius:3.500px;"></div>
<svg style="left:1408px;top:32px;" width="14" height="13"><path d="M4.500 3.500h-2v8h9v-3" fill="none" stroke="#fff" stroke-width="1.100"/><path d="M5 8.500c.5-3 2.500-4.500 6-4.500M9 1.500l2.500 2.500-2.500 2.500" fill="none" stroke="#fff" stroke-width="1.100"/></svg>
<svg class="g" style="left:1423px;top:31.5px;" width="19.2" height="15" role="img"><title>分享</title><g fill="#fff"><text class="cj" x="0" y="10.83" font-size="9.6">分享</text></g></svg>
<div style="left:737.5px;top:54px;width:709px;height:56px;background:#fff;border-radius:7px;box-shadow:0 0 2px rgba(0,0,0,.12);"></div>
<svg style="left:751px;top:63px;" width="15" height="15"><g fill="none" stroke="#b4b4b4" stroke-width="1.100"><path d="M2.500 7.500v-3h3.500v-3h3v3h3.500v3z"/><path d="M3.500 7.500l-1 6h10l-1-6M5.500 13.500v-2"/></g></svg>
<svg class="g" style="left:767px;top:64px;" width="27.6" height="14" role="img"><title>格式刷</title><g fill="#a8a8a8"><text class="cj" x="0" y="10.19" font-size="9.2">格式刷</text></g></svg>
<svg style="left:803px;top:63px;" width="15" height="15"><g fill="none" stroke="#b4b4b4" stroke-width="1.100"><circle cx="3.500" cy="11.500" r="2"/><circle cx="10.500" cy="11.500" r="2"/><path d="M4.500 9.800L10 1.500M9.500 9.800L4 1.500"/></g></svg>
<svg style="left:751px;top:84px;" width="15" height="15"><g fill="none" stroke="#b4b4b4" stroke-width="1.100"><path d="M5 3.500h-2.500v10h4"/><path d="M5 2.500h4.500v2h-4.500z"/><path d="M9.500 3.500h2.500v3"/><rect x="7.500" y="7.500" width="5.500" height="6.500"/><path d="M9.300 10v2.500M11.200 10v2.500"/></g></svg>
<svg class="g" style="left:767px;top:85px;" width="18.4" height="14" role="img"><title>粘贴</title><g fill="#a8a8a8"><text class="cj" x="0" y="10.19" font-size="9.2">粘贴</text></g></svg>
<svg style="left:787px;top:90px;" width="8" height="6"><path d="M1.500 1.500l2.300 2.300 2.300-2.300" stroke="#b4b4b4" stroke-width="1" fill="none"/></svg>
<svg style="left:804px;top:84px;" width="15" height="15"><g fill="none" stroke="#b4b4b4" stroke-width="1.100"><path d="M4.500 9.500h-3v-8h6.500v2"/><path d="M5.500 4.500h4l3 3v6.500h-7z"/><path d="M9 4.500v3.500h3.500"/></g></svg>
<svg style="left:820px;top:90px;" width="8" height="6"><path d="M1.500 1.500l2.300 2.300 2.300-2.300" stroke="#b4b4b4" stroke-width="1" fill="none"/></svg>
<svg style="left:829px;top:102px;" width="6" height="6"><path d="M1 1l3.500 3.500M4.700 2v2.700H2" stroke="#c4c4c4" stroke-width=".9" fill="none"/></svg>
<div style="left:837px;top:57px;width:1px;height:50px;background:#e6e6e6;"></div>
<div style="left:843.5px;top:61px;width:162.5px;height:18.5px;background:#f5f5f5;border-radius:4px;"></div>
<div style="left:959px;top:62px;width:1px;height:16.5px;background:#e9e9e9;"></div>
<div class="t" style="left:853px;top:64.3px;width:40px;height:15px;line-height:15px;font-size:9.5px;color:#999;text-align:left;">Arial</div>
<svg style="left:948px;top:68px;" width="9" height="6"><path d="M1 1l3 3 3-3" stroke="#c8c8c8" stroke-width="1" fill="none"/></svg>
<div class="t" style="left:967px;top:64.3px;width:20px;height:15px;line-height:15px;font-size:9.5px;color:#999;text-align:left;">10</div>
<svg style="left:994px;top:68px;" width="9" height="6"><path d="M1 1l3 3 3-3" stroke="#c8c8c8" stroke-width="1" fill="none"/></svg>
<div class="t" style="left:1015px;top:64px;width:10px;height:15px;line-height:15px;font-size:11.5px;color:#b4b4b4;text-align:left;">A</div>
<div class="t" style="left:1022.5px;top:60.5px;width:8px;height:10px;line-height:10px;font-size:7.5px;color:#b4b4b4;text-align:left;">+</div>
<div class="t" style="left:1037px;top:64px;width:10px;height:15px;line-height:15px;font-size:11.5px;color:#b4b4b4;text-align:left;">A</div>
<div class="t" style="left:1045px;top:59.5px;width:8px;height:10px;line-height:10px;font-size:7.5px;color:#b4b4b4;text-align:left;">–</div>
<div class="t" style="left:848.5px;top:84px;width:10px;height:16px;line-height:16px;font-size:11.5px;color:#b4b4b4;text-align:left;">B</div>
<div class="t" style="left:869px;top:84px;width:10px;height:16px;line-height:16px;font-size:11.5px;color:#b4b4b4;text-align:center;font-style:italic;font-family:'Liberation Serif',serif;">I</div>
<div class="t" style="left:890px;top:84px;width:10px;height:15px;line-height:15px;font-size:10.5px;color:#b4b4b4;text-align:left;">U</div>
<div style="left:890.5px;top:97.5px;width:8.5px;height:1px;background:#b4b4b4;"></div>
<div class="t" style="left:912.5px;top:84px;width:10px;height:16px;line-height:16px;font-size:10.5px;color:#b4b4b4;text-align:left;">A</div>
<div style="left:912px;top:92.5px;width:10.5px;height:1px;background:#b4b4b4;"></div>
<div style="left:912px;top:95px;width:10.5px;height:1px;background:#fff;"></div>
<svg style="left:932px;top:86px;" width="12" height="12"><g fill="none" stroke="#b4b4b4" stroke-width="1.100"><rect x="1.500" y="1.500" width="9" height="9" rx="1"/><path d="M6 1.500v9M1.500 6h9"/></g></svg>
<svg style="left:947px;top:90px;" width="8" height="6"><path d="M1.500 1.500l2.300 2.300 2.300-2.300" stroke="#b4b4b4" stroke-width="1" fill="none"/></svg>
<svg style="left:963px;top:84px;" width="14" height="15"><g fill="none" stroke="#b4b4b4" stroke-width="1.100"><path d="M3.500 8.500l3.500-5 4 3-3.500 3.500z"/><path d="M6.500 1.500l4.500 3.500"/></g><rect x="1.500" y="12" width="11" height="2.300" rx="1" fill="#d9d9d9"/></svg>
<svg style="left:978px;top:90px;" width="8" height="6"><path d="M1.500 1.500l2.300 2.300 2.300-2.300" stroke="#b4b4b4" stroke-width="1" fill="none"/></svg>
<div class="t" style="left:994.5px;top:82px;width:12px;height:15px;line-height:15px;font-size:10.5px;color:#b4b4b4;text-align:center;">A</div>
<div style="left:994px;top:96px;width:12.5px;height:2.8px;background:#b9b9b9;border-radius:1px;"></div>
<svg style="left:1008px;top:90px;" width="8" height="6"><path d="M1.500 1.500l2.300 2.300 2.300-2.300" stroke="#b4b4b4" stroke-width="1" fill="none"/></svg>
<svg style="left:1023px;top:85px;" width="14" height="14"><g fill="none" stroke="#b4b4b4" stroke-width="1.100"><path d="M2 8l5.500-5.500 4.500 4.500-4.500 4.500h-2.500z"/><path d="M4.500 12.500h8"/></g></svg>
<svg style="left:1039px;top:90px;" width="8" height="6"><path d="M1.500 1.500l2.300 2.300 2.300-2.300" stroke="#b4b4b4" stroke-width="1" fill="none"/></svg>
<svg style="left:1048.5px;top:102px;" width="6" height="6"><path d="M1 1l3.500 3.500M4.700 2v2.700H2" stroke="#c4c4c4" stroke-width=".9" fill="none"/></svg>
<div style="left:1056.5px;top:57px;width:1px;height:50px;background:#e6e6e6;"></div>
<svg style="left:1079px;top:64px;" width="16" height="14"><path d="M1.500 2h12M4 7h9.500M1.500 12h12" stroke="#b4b4b4" stroke-width="1.100"/></svg>
<svg class="g" style="left:1066px;top:85px;" width="37.2" height="14" role="img"><title>对齐方式</title><g fill="#a8a8a8"><text class="cj" x="0" y="10.22" font-size="9.3">对齐方式</text></g></svg>
<svg style="left:1105px;top:90px;" width="8" height="6"><path d="M1.500 1.500l2.300 2.300 2.300-2.300" stroke="#b4b4b4" stroke-width="1" fill="none"/></svg>
<svg style="left:1112px;top:102px;" width="6" height="6"><path d="M1 1l3.500 3.500M4.700 2v2.700H2" stroke="#c4c4c4" stroke-width=".9" fill="none"/></svg>
<div style="left:1120px;top:57px;width:1px;height:50px;background:#e6e6e6;"></div>
<svg style="left:1144px;top:64px;" width="18" height="15"><g fill="none" stroke="#b4b4b4" stroke-width="1.100"><rect x="1" y="1" width="16" height="13" rx="1.500"/><path d="M9.500 5h4.500M9.500 7.500h4.500M9.500 10h4.500"/></g><text x="6" y="10.800" font-size="8" fill="#b4b4b4" text-anchor="middle" font-family="Liberation Sans,sans-serif">1</text></svg>
<svg class="g" style="left:1130px;top:85px;" width="37.2" height="14" role="img"><title>数字格式</title><g fill="#a8a8a8"><text class="cj" x="0" y="10.22" font-size="9.3">数字格式</text></g></svg>
<svg style="left:1168px;top:90px;" width="8" height="6"><path d="M1.500 1.500l2.300 2.300 2.300-2.300" stroke="#b4b4b4" stroke-width="1" fill="none"/></svg>
<svg style="left:1176.5px;top:102px;" width="6" height="6"><path d="M1 1l3.500 3.500M4.700 2v2.700H2" stroke="#c4c4c4" stroke-width=".9" fill="none"/></svg>
<div style="left:1184.5px;top:57px;width:1px;height:50px;background:#e6e6e6;"></div>
<svg style="left:1204px;top:63px;" width="17" height="17"><g fill="none" stroke="#b4b4b4" stroke-width="1.100"><rect x="3" y="3" width="11" height="11"/><path d="M3 .5v2.500h-2.500M14 .5v2.500h2.500M3 16.500v-2.500h-2.500M14 16.500v-2.500h2.500"/></g></svg>
<svg class="g" style="left:1195px;top:85px;" width="27.9" height="14" role="img"><title>单元格</title><g fill="#a8a8a8"><text class="cj" x="0" y="10.22" font-size="9.3">单元格</text></g></svg>
<svg style="left:1223.5px;top:90px;" width="8" height="6"><path d="M1.500 1.500l2.300 2.300 2.300-2.300" stroke="#b4b4b4" stroke-width="1" fill="none"/></svg>
<div style="left:1240px;top:57px;width:1px;height:50px;background:#e6e6e6;"></div>
<svg style="left:1254px;top:63px;" width="19" height="16"><g fill="none" stroke="#b4b4b4" stroke-width="1.100"><path d="M8 11h-6.500v-9.500h10v5"/><path d="M1.500 6h10M6.500 1.500v9.500"/><path d="M9.500 13.500l1-3 5-4.500 1.500 1.500-5 5z"/></g></svg>
<svg class="g" style="left:1250px;top:85px;" width="18.6" height="14" role="img"><title>样式</title><g fill="#a8a8a8"><text class="cj" x="0" y="10.22" font-size="9.3">样式</text></g></svg>
<svg style="left:1269.5px;top:90px;" width="8" height="6"><path d="M1.500 1.500l2.300 2.300 2.300-2.300" stroke="#b4b4b4" stroke-width="1" fill="none"/></svg>
<div style="left:1286.5px;top:57px;width:1px;height:50px;background:#e6e6e6;"></div>
<svg style="left:1310px;top:63px;" width="16" height="16"><path d="M13.500 3.500v-2h-11l6 6.500-6 6.500h11v-2" fill="none" stroke="#b4b4b4" stroke-width="1.100"/></svg>
<svg class="g" style="left:1296.5px;top:85px;" width="37.2" height="14" role="img"><title>数据处理</title><g fill="#a8a8a8"><text class="cj" x="0" y="10.22" font-size="9.3">数据处理</text></g></svg>
<svg style="left:1334.5px;top:90px;" width="8" height="6"><path d="M1.500 1.500l2.300 2.300 2.300-2.300" stroke="#b4b4b4" stroke-width="1" fill="none"/></svg>
<div style="left:737.5px;top:116px;width:122.5px;height:20.5px;background:#fff;border-radius:5px;box-shadow:0 0 1.500px rgba(0,0,0,.15);"></div>
<div class="t" style="left:775px;top:118.5px;width:32px;height:16px;line-height:16px;font-size:11px;color:#222;text-align:center;font-family:'Liberation Serif',serif;">B8</div>
<svg style="left:846.5px;top:123px;" width="10" height="7"><path d="M1.500 1.500l3 3 3-3" stroke="#555" stroke-width=".9" fill="none"/></svg>
<div style="left:868px;top:116px;width:535.5px;height:20.5px;background:#fff;border-radius:5px;box-shadow:0 0 1.500px rgba(0,0,0,.15);"></div>
<svg style="left:885px;top:120px;" width="13" height="13"><circle cx="5.500" cy="5.500" r="4.300" fill="none" stroke="#b5b5b5" stroke-width="1"/><path d="M3.500 5.500h4M8.700 8.700l2.800 2.800" stroke="#b5b5b5" stroke-width="1"/></svg>
<div class="t" style="left:908px;top:118px;width:14px;height:16px;line-height:16px;font-size:11.5px;color:#aaa;text-align:left;font-style:italic;font-family:'Liberation Serif',serif;">fx</div>
<div style="left:929.5px;top:120px;width:1px;height:12px;background:#d6d6d6;"></div>
<div class="t" style="left:935px;top:118.5px;width:50px;height:16px;line-height:16px;font-size:11.5px;color:#222;text-align:left;font-family:'Liberation Serif',serif;letter-spacing:-.5px;">2ZB17</div>
<div style="left:728px;top:142px;width:672px;height:607px;background:#fff;"></div>
<div style="left:728px;top:142px;width:672px;height:22.3px;background:#efefef;"></div>
<div style="left:728px;top:142px;width:34.75px;height:607px;background:#efefef;"></div>
<div style="left:848.5px;top:142px;width:85.5px;height:22.3px;background:#dbdbdb;"></div>
<div style="left:728px;top:303.0px;width:34.75px;height:19.75px;background:#d8d8d8;"></div>
<svg style="left:728px;top:142px;" width="672" height="607" viewBox="728 142 672 607"><path d="M848.5 164.3V749M934 164.3V749M1043.5 164.3V749M1104.5 164.3V749M1174.5 164.3V749M1228.5 164.3V749M1305.5 164.3V749M1383 164.3V749M1383 164.3V749M728 184.25H1400M728 204.25H1400M728 224.0H1400M728 243.75H1400M728 263.5H1400M728 283.25H1400M728 303.0H1400M728 322.75H1400M728 342.5H1400M728 362.25H1400M728 382.0H1400M728 401.75H1400M728 421.5H1400M728 441.25H1400M728 461.0H1400M728 480.75H1400M728 500.5H1400M728 520.25H1400M728 540.0H1400M728 559.75H1400M728 579.5H1400M728 599.25H1400M728 619.0H1400M728 638.75H1400M728 658.5H1400M728 678.25H1400M728 698.0H1400M728 717.75H1400M728 737.5H1400" stroke="#e7e7e7" stroke-width="1" fill="none"/><path d="M848.5 144V163M934 144V163M1043.5 144V163M1104.5 144V163M1174.5 144V163M1228.5 144V163M1305.5 144V163M1383 144V163" stroke="#dcdcdc" stroke-width="1" fill="none"/><rect x="762.75" y="164.3" width="620.25" height="355.95" fill="#fff"/><path d="M762.75 204.25H1383M762.75 520.25H1383M1228.5 184.25H1383M848.5 224.0H1383M848.5 243.75H1383M848.5 263.5H1383M848.5 283.25H1383M848.5 303.0H1383M848.5 322.75H1383M848.5 342.5H1383M848.5 362.25H1383M848.5 382.0H1383M848.5 401.75H1383M848.5 421.5H1383M848.5 441.25H1383M848.5 461.0H1383M848.5 480.75H1383M848.5 500.5H1383M848.5 164.3V520.25M934 164.3V520.25M1043.5 164.3V520.25M1104.5 164.3V480.75M1104.5 500.5V520.25M1174.5 164.3V480.75M1174.5 500.5V520.25M1228.5 164.3V204.25M1228.5 224.0V520.25M1305.5 184.25V204.25M1305.5 224.0V520.25M1383 164.3V520.25" stroke="#3c3c3c" stroke-width="1.100" fill="none"/><path d="M728 184.25H762M728 204.25H762M728 224.0H762M728 243.75H762M728 263.5H762M728 283.25H762M728 303.0H762M728 322.75H762M728 342.5H762M728 362.25H762M728 382.0H762M728 401.75H762M728 421.5H762M728 441.25H762M728 461.0H762M728 480.75H762M728 500.5H762M728 520.25H762M728 540.0H762M728 559.75H762M728 579.5H762M728 599.25H762M728 619.0H762M728 638.75H762M728 658.5H762M728 678.25H762M728 698.0H762M728 717.75H762M728 737.5H762" stroke="#e0e0e0" stroke-width="1" fill="none"/><rect x="848.5" y="303.0" width="85.5" height="19.75" fill="none" stroke="#4a9a30" stroke-width="1.800"/><rect x="931.5" y="320.25" width="4.500" height="4.500" fill="#4a9a30" stroke="#fff" stroke-width=".8"/><path d="M848.0 164.100H934.5" stroke="#4a9a30" stroke-width="2"/><path d="M762 303.0V322.75" stroke="#4a9a30" stroke-width="1.600"/><path d="M743 157.500h6v-6z" fill="#666"/></svg>
<div class="t" style="left:790.625px;top:144px;width:30px;height:20.5px;line-height:20.5px;font-size:15px;color:#4a4a4a;text-align:center;">A</div>
<div class="t" style="left:876.25px;top:144px;width:30px;height:20.5px;line-height:20.5px;font-size:15px;color:#0a7d5e;text-align:center;">B</div>
<div class="t" style="left:973.75px;top:144px;width:30px;height:20.5px;line-height:20.5px;font-size:15px;color:#4a4a4a;text-align:center;">C</div>
<div class="t" style="left:1059.0px;top:144px;width:30px;height:20.5px;line-height:20.5px;font-size:15px;color:#4a4a4a;text-align:center;">D</div>
<div class="t" style="left:1124.5px;top:144px;width:30px;height:20.5px;line-height:20.5px;font-size:15px;color:#4a4a4a;text-align:center;">E</div>
<div class="t" style="left:1186.5px;top:144px;width:30px;height:20.5px;line-height:20.5px;font-size:15px;color:#4a4a4a;text-align:center;">F</div>
<div class="t" style="left:1252.0px;top:144px;width:30px;height:20.5px;line-height:20.5px;font-size:15px;color:#4a4a4a;text-align:center;">G</div>
<div class="t" style="left:1329.25px;top:144px;width:30px;height:20.5px;line-height:20.5px;font-size:15px;color:#4a4a4a;text-align:center;">H</div>
<div class="t" style="left:728px;top:164.9px;width:36px;height:20.5px;line-height:20.5px;font-size:15px;color:#4a4a4a;text-align:center;">1</div>
<div class="t" style="left:728px;top:184.85px;width:36px;height:20.5px;line-height:20.5px;font-size:15px;color:#4a4a4a;text-align:center;">2</div>
<div class="t" style="left:728px;top:204.85px;width:36px;height:19.75px;line-height:19.75px;font-size:15px;color:#4a4a4a;text-align:center;">3</div>
<div class="t" style="left:728px;top:224.6px;width:36px;height:19.75px;line-height:19.75px;font-size:15px;color:#4a4a4a;text-align:center;">4</div>
<div class="t" style="left:728px;top:244.35px;width:36px;height:19.75px;line-height:19.75px;font-size:15px;color:#4a4a4a;text-align:center;">5</div>
<div class="t" style="left:728px;top:264.1px;width:36px;height:19.75px;line-height:19.75px;font-size:15px;color:#4a4a4a;text-align:center;">6</div>
<div class="t" style="left:728px;top:283.85px;width:36px;height:19.75px;line-height:19.75px;font-size:15px;color:#4a4a4a;text-align:center;">7</div>
<div class="t" style="left:728px;top:303.6px;width:36px;height:19.75px;line-height:19.75px;font-size:15px;color:#0a7d5e;text-align:center;">8</div>
<div class="t" style="left:728px;top:323.35px;width:36px;height:19.75px;line-height:19.75px;font-size:15px;color:#4a4a4a;text-align:center;">9</div>
<div class="t" style="left:728px;top:343.1px;width:36px;height:19.75px;line-height:19.75px;font-size:15px;color:#4a4a4a;text-align:center;">10</div>
<div class="t" style="left:728px;top:362.85px;width:36px;height:19.75px;line-height:19.75px;font-size:15px;color:#4a4a4a;text-align:center;">11</div>
<div class="t" style="left:728px;top:382.6px;width:36px;height:19.75px;line-height:19.75px;font-size:15px;color:#4a4a4a;text-align:center;">12</div>
<div class="t" style="left:728px;top:402.35px;width:36px;height:19.75px;line-height:19.75px;font-size:15px;color:#4a4a4a;text-align:center;">13</div>
<div class="t" style="left:728px;top:422.1px;width:36px;height:19.75px;line-height:19.75px;font-size:15px;color:#4a4a4a;text-align:center;">14</div>
<div class="t" style="left:728px;top:441.85px;width:36px;height:19.75px;line-height:19.75px;font-size:15px;color:#4a4a4a;text-align:center;">15</div>
<div class="t" style="left:728px;top:461.6px;width:36px;height:19.75px;line-height:19.75px;font-size:15px;color:#4a4a4a;text-align:center;">16</div>
<div class="t" style="left:728px;top:481.35px;width:36px;height:19.75px;line-height:19.75px;font-size:15px;color:#4a4a4a;text-align:center;">17</div>
<div class="t" style="left:728px;top:501.1px;width:36px;height:19.75px;line-height:19.75px;font-size:15px;color:#4a4a4a;text-align:center;">18</div>
<div class="t" style="left:728px;top:520.85px;width:36px;height:19.75px;line-height:19.75px;font-size:15px;color:#4a4a4a;text-align:center;">19</div>
<div class="t" style="left:728px;top:540.6px;width:36px;height:19.75px;line-height:19.75px;font-size:15px;color:#4a4a4a;text-align:center;">20</div>
<div class="t" style="left:728px;top:560.35px;width:36px;height:19.75px;line-height:19.75px;font-size:15px;color:#4a4a4a;text-align:center;">21</div>
<div class="t" style="left:728px;top:580.1px;width:36px;height:19.75px;line-height:19.75px;font-size:15px;color:#4a4a4a;text-align:center;">22</div>
<div class="t" style="left:728px;top:599.85px;width:36px;height:19.75px;line-height:19.75px;font-size:15px;color:#4a4a4a;text-align:center;">23</div>
<div class="t" style="left:728px;top:619.6px;width:36px;height:19.75px;line-height:19.75px;font-size:15px;color:#4a4a4a;text-align:center;">24</div>
<div class="t" style="left:728px;top:639.35px;width:36px;height:19.75px;line-height:19.75px;font-size:15px;color:#4a4a4a;text-align:center;">25</div>
<div class="t" style="left:728px;top:659.1px;width:36px;height:19.75px;line-height:19.75px;font-size:15px;color:#4a4a4a;text-align:center;">26</div>
<div class="t" style="left:728px;top:678.85px;width:36px;height:19.75px;line-height:19.75px;font-size:15px;color:#4a4a4a;text-align:center;">27</div>
<div class="t" style="left:728px;top:698.6px;width:36px;height:19.75px;line-height:19.75px;font-size:15px;color:#4a4a4a;text-align:center;">28</div>
<div class="t" style="left:728px;top:718.35px;width:36px;height:19.75px;line-height:19.75px;font-size:15px;color:#4a4a4a;text-align:center;">29</div>
<div class="t" style="left:728px;top:738.1px;width:36px;height:19.75px;line-height:19.75px;font-size:15px;color:#4a4a4a;text-align:center;clip-path:inset(0 0 9.1px 0);">30</div>
<svg class="g" style="left:775.62px;top:165.9px;" width="60" height="39.94999999999999" role="img"><title>构件编号</title><g fill="#111"><text class="cs" x="0" y="25.17" font-size="15">构件编号</text></g></svg>
<svg class="g" style="left:861.25px;top:165.9px;" width="60" height="39.94999999999999" role="img"><title>零件编号</title><g fill="#111"><text class="cs" x="0" y="25.17" font-size="15">零件编号</text></g></svg>
<svg class="g" style="left:958.75px;top:165.9px;" width="60" height="39.94999999999999" role="img"><title>规  格</title><g fill="#111"><text class="cs" x="0" y="25.17" font-size="15">规</text><text class="cs" x="45" y="25.17" font-size="15">格</text></g></svg>
<svg class="g" style="left:1059px;top:165.9px;" width="30" height="39.94999999999999" role="img"><title>长度</title><g fill="#111"><text class="cs" x="0" y="25.17" font-size="15">长度</text></g></svg>
<svg class="g" style="left:1122.42px;top:165.9px;" width="34.17" height="39.94999999999999" role="img"><title>材 质</title><g fill="#111"><text class="cs" x="0" y="25.17" font-size="15">材</text><text class="cs" x="19.17" y="25.17" font-size="15">质</text></g></svg>
<svg class="g" style="left:1186.5px;top:165.9px;" width="30" height="39.94999999999999" role="img"><title>数量</title><g fill="#111"><text class="cs" x="0" y="25.17" font-size="15">数量</text></g></svg>
<svg class="g" style="left:1287px;top:165.4px;" width="37.5" height="19.94999999999999" role="img"><title>重 量</title><g fill="#111"><text class="cs" x="0" y="15.17" font-size="15">重</text><text class="cs" x="22.5" y="15.17" font-size="15">量</text></g></svg>
<svg class="g" style="left:1248.25px;top:185.85px;" width="37.5" height="20.0" role="img"><title>单 重</title><g fill="#111"><text class="cs" x="0" y="15.2" font-size="15">单</text><text class="cs" x="22.5" y="15.2" font-size="15">重</text></g></svg>
<svg class="g" style="left:1325.5px;top:185.85px;" width="37.5" height="20.0" role="img"><title>总 重</title><g fill="#111"><text class="cs" x="0" y="15.2" font-size="15">总</text><text class="cs" x="22.5" y="15.2" font-size="15">重</text></g></svg>
<div class="t" style="left:762.75px;top:204.85px;width:85.75px;height:316.0px;line-height:316.0px;font-size:15px;color:#111;text-align:center;">2GKZ1-1</div>
<svg class="g" style="left:966.25px;top:205.85px;" width="45" height="19.75" role="img"><title>钢框柱</title><g fill="#111"><text class="cs" x="0" y="15.07" font-size="15">钢框柱</text></g></svg>
<div class="t" style="left:1174.5px;top:204.85px;width:208.5px;height:19.75px;line-height:19.75px;font-size:15px;color:#111;text-align:center;">1 x 4758.07 = 4758.07</div>
<div class="t" style="left:848.5px;top:224.6px;width:85.5px;height:19.75px;line-height:19.75px;font-size:15px;color:#111;text-align:center;">2ZP5</div>
<div class="t" style="left:934px;top:224.6px;width:109.5px;height:19.75px;line-height:19.75px;font-size:15px;color:#111;text-align:center;">P500*500*20</div>
<div class="t" style="left:1043.5px;top:224.6px;width:61.0px;height:19.75px;line-height:19.75px;font-size:15px;color:#111;text-align:center;">13389</div>
<div class="t" style="left:1104.5px;top:224.6px;width:70.0px;height:19.75px;line-height:19.75px;font-size:15px;color:#111;text-align:center;">Q355B</div>
<div class="t" style="left:1174.5px;top:224.6px;width:54.0px;height:19.75px;line-height:19.75px;font-size:15px;color:#111;text-align:center;">1</div>
<div class="t" style="left:1228.5px;top:224.6px;width:77.0px;height:19.75px;line-height:19.75px;font-size:15px;color:#111;text-align:center;">4036.28</div>
<div class="t" style="left:1305.5px;top:224.6px;width:77.5px;height:19.75px;line-height:19.75px;font-size:15px;color:#111;text-align:center;">4036.28</div>
<div class="t" style="left:848.5px;top:244.35px;width:85.5px;height:19.75px;line-height:19.75px;font-size:15px;color:#111;text-align:center;">2ZB7</div>
<div class="t" style="left:934px;top:244.35px;width:109.5px;height:19.75px;line-height:19.75px;font-size:15px;color:#111;text-align:center;">PL20*130</div>
<div class="t" style="left:1043.5px;top:244.35px;width:61.0px;height:19.75px;line-height:19.75px;font-size:15px;color:#111;text-align:center;">390</div>
<div class="t" style="left:1104.5px;top:244.35px;width:70.0px;height:19.75px;line-height:19.75px;font-size:15px;color:#111;text-align:center;">Q355B</div>
<div class="t" style="left:1174.5px;top:244.35px;width:54.0px;height:19.75px;line-height:19.75px;font-size:15px;color:#111;text-align:center;">4</div>
<div class="t" style="left:1228.5px;top:244.35px;width:77.0px;height:19.75px;line-height:19.75px;font-size:15px;color:#111;text-align:center;">7.96</div>
<div class="t" style="left:1305.5px;top:244.35px;width:77.5px;height:19.75px;line-height:19.75px;font-size:15px;color:#111;text-align:center;">31.84</div>
<div class="t" style="left:848.5px;top:264.1px;width:85.5px;height:19.75px;line-height:19.75px;font-size:15px;color:#111;text-align:center;">2ZB12</div>
<div class="t" style="left:934px;top:264.1px;width:109.5px;height:19.75px;line-height:19.75px;font-size:15px;color:#111;text-align:center;">PL30*50</div>
<div class="t" style="left:1043.5px;top:264.1px;width:61.0px;height:19.75px;line-height:19.75px;font-size:15px;color:#111;text-align:center;">460</div>
<div class="t" style="left:1104.5px;top:264.1px;width:70.0px;height:19.75px;line-height:19.75px;font-size:15px;color:#111;text-align:center;">Q355B</div>
<div class="t" style="left:1174.5px;top:264.1px;width:54.0px;height:19.75px;line-height:19.75px;font-size:15px;color:#111;text-align:center;">20</div>
<div class="t" style="left:1228.5px;top:264.1px;width:77.0px;height:19.75px;line-height:19.75px;font-size:15px;color:#111;text-align:center;">5.42</div>
<div class="t" style="left:1305.5px;top:264.1px;width:77.5px;height:19.75px;line-height:19.75px;font-size:15px;color:#111;text-align:center;">108.33</div>
<div class="t" style="left:848.5px;top:283.85px;width:85.5px;height:19.75px;line-height:19.75px;font-size:15px;color:#111;text-align:center;">2ZB16</div>
<div class="t" style="left:934px;top:283.85px;width:109.5px;height:19.75px;line-height:19.75px;font-size:15px;color:#111;text-align:center;">PL6*30</div>
<div class="t" style="left:1043.5px;top:283.85px;width:61.0px;height:19.75px;line-height:19.75px;font-size:15px;color:#111;text-align:center;">460</div>
<div class="t" style="left:1104.5px;top:283.85px;width:70.0px;height:19.75px;line-height:19.75px;font-size:15px;color:#111;text-align:center;">Q355B</div>
<div class="t" style="left:1174.5px;top:283.85px;width:54.0px;height:19.75px;line-height:19.75px;font-size:15px;color:#111;text-align:center;">2</div>
<div class="t" style="left:1228.5px;top:283.85px;width:77.0px;height:19.75px;line-height:19.75px;font-size:15px;color:#111;text-align:center;">0.65</div>
<div class="t" style="left:1305.5px;top:283.85px;width:77.5px;height:19.75px;line-height:19.75px;font-size:15px;color:#111;text-align:center;">1.3</div>
<div class="t" style="left:848.5px;top:303.6px;width:85.5px;height:19.75px;line-height:19.75px;font-size:15px;color:#111;text-align:center;">2ZB17</div>
<div class="t" style="left:934px;top:303.6px;width:109.5px;height:19.75px;line-height:19.75px;font-size:15px;color:#111;text-align:center;">PL6*30</div>
<div class="t" style="left:1043.5px;top:303.6px;width:61.0px;height:19.75px;line-height:19.75px;font-size:15px;color:#111;text-align:center;">448</div>
<div class="t" style="left:1104.5px;top:303.6px;width:70.0px;height:19.75px;line-height:19.75px;font-size:15px;color:#111;text-align:center;">Q355B</div>
<div class="t" style="left:1174.5px;top:303.6px;width:54.0px;height:19.75px;line-height:19.75px;font-size:15px;color:#111;text-align:center;">2</div>
<div class="t" style="left:1228.5px;top:303.6px;width:77.0px;height:19.75px;line-height:19.75px;font-size:15px;color:#111;text-align:center;">0.63</div>
<div class="t" style="left:1305.5px;top:303.6px;width:77.5px;height:19.75px;line-height:19.75px;font-size:15px;color:#111;text-align:center;">1.27</div>
<div class="t" style="left:848.5px;top:323.35px;width:85.5px;height:19.75px;line-height:19.75px;font-size:15px;color:#111;text-align:center;">2ZB21</div>
<div class="t" style="left:934px;top:323.35px;width:109.5px;height:19.75px;line-height:19.75px;font-size:15px;color:#111;text-align:center;">PL14*90</div>
<div class="t" style="left:1043.5px;top:323.35px;width:61.0px;height:19.75px;line-height:19.75px;font-size:15px;color:#111;text-align:center;">645</div>
<div class="t" style="left:1104.5px;top:323.35px;width:70.0px;height:19.75px;line-height:19.75px;font-size:15px;color:#111;text-align:center;">Q355B</div>
<div class="t" style="left:1174.5px;top:323.35px;width:54.0px;height:19.75px;line-height:19.75px;font-size:15px;color:#111;text-align:center;">8</div>
<div class="t" style="left:1228.5px;top:323.35px;width:77.0px;height:19.75px;line-height:19.75px;font-size:15px;color:#111;text-align:center;">6.38</div>
<div class="t" style="left:1305.5px;top:323.35px;width:77.5px;height:19.75px;line-height:19.75px;font-size:15px;color:#111;text-align:center;">51.04</div>
<div class="t" style="left:848.5px;top:343.1px;width:85.5px;height:19.75px;line-height:19.75px;font-size:15px;color:#111;text-align:center;">2ZB23</div>
<div class="t" style="left:934px;top:343.1px;width:109.5px;height:19.75px;line-height:19.75px;font-size:15px;color:#111;text-align:center;">PL14*230</div>
<div class="t" style="left:1043.5px;top:343.1px;width:61.0px;height:19.75px;line-height:19.75px;font-size:15px;color:#111;text-align:center;">520</div>
<div class="t" style="left:1104.5px;top:343.1px;width:70.0px;height:19.75px;line-height:19.75px;font-size:15px;color:#111;text-align:center;">Q355B</div>
<div class="t" style="left:1174.5px;top:343.1px;width:54.0px;height:19.75px;line-height:19.75px;font-size:15px;color:#111;text-align:center;">4</div>
<div class="t" style="left:1228.5px;top:343.1px;width:77.0px;height:19.75px;line-height:19.75px;font-size:15px;color:#111;text-align:center;">13.14</div>
<div class="t" style="left:1305.5px;top:343.1px;width:77.5px;height:19.75px;line-height:19.75px;font-size:15px;color:#111;text-align:center;">52.58</div>
<div class="t" style="left:848.5px;top:362.85px;width:85.5px;height:19.75px;line-height:19.75px;font-size:15px;color:#111;text-align:center;">2ZB24</div>
<div class="t" style="left:934px;top:362.85px;width:109.5px;height:19.75px;line-height:19.75px;font-size:15px;color:#111;text-align:center;">PL18*130</div>
<div class="t" style="left:1043.5px;top:362.85px;width:61.0px;height:19.75px;line-height:19.75px;font-size:15px;color:#111;text-align:center;">390</div>
<div class="t" style="left:1104.5px;top:362.85px;width:70.0px;height:19.75px;line-height:19.75px;font-size:15px;color:#111;text-align:center;">Q355B</div>
<div class="t" style="left:1174.5px;top:362.85px;width:54.0px;height:19.75px;line-height:19.75px;font-size:15px;color:#111;text-align:center;">4</div>
<div class="t" style="left:1228.5px;top:362.85px;width:77.0px;height:19.75px;line-height:19.75px;font-size:15px;color:#111;text-align:center;">7.16</div>
<div class="t" style="left:1305.5px;top:362.85px;width:77.5px;height:19.75px;line-height:19.75px;font-size:15px;color:#111;text-align:center;">28.66</div>
<div class="t" style="left:848.5px;top:382.6px;width:85.5px;height:19.75px;line-height:19.75px;font-size:15px;color:#111;text-align:center;">2ZB27</div>
<div class="t" style="left:934px;top:382.6px;width:109.5px;height:19.75px;line-height:19.75px;font-size:15px;color:#111;text-align:center;">PL16*135</div>
<div class="t" style="left:1043.5px;top:382.6px;width:61.0px;height:19.75px;line-height:19.75px;font-size:15px;color:#111;text-align:center;">250</div>
<div class="t" style="left:1104.5px;top:382.6px;width:70.0px;height:19.75px;line-height:19.75px;font-size:15px;color:#111;text-align:center;">Q355B</div>
<div class="t" style="left:1174.5px;top:382.6px;width:54.0px;height:19.75px;line-height:19.75px;font-size:15px;color:#111;text-align:center;">4</div>
<div class="t" style="left:1228.5px;top:382.6px;width:77.0px;height:19.75px;line-height:19.75px;font-size:15px;color:#111;text-align:center;">4.24</div>
<div class="t" style="left:1305.5px;top:382.6px;width:77.5px;height:19.75px;line-height:19.75px;font-size:15px;color:#111;text-align:center;">16.96</div>
<div class="t" style="left:848.5px;top:402.35px;width:85.5px;height:19.75px;line-height:19.75px;font-size:15px;color:#111;text-align:center;">2ZB29</div>
<div class="t" style="left:934px;top:402.35px;width:109.5px;height:19.75px;line-height:19.75px;font-size:15px;color:#111;text-align:center;">PL16*460</div>
<div class="t" style="left:1043.5px;top:402.35px;width:61.0px;height:19.75px;line-height:19.75px;font-size:15px;color:#111;text-align:center;">460</div>
<div class="t" style="left:1104.5px;top:402.35px;width:70.0px;height:19.75px;line-height:19.75px;font-size:15px;color:#111;text-align:center;">Q355B</div>
<div class="t" style="left:1174.5px;top:402.35px;width:54.0px;height:19.75px;line-height:19.75px;font-size:15px;color:#111;text-align:center;">1</div>
<div class="t" style="left:1228.5px;top:402.35px;width:77.0px;height:19.75px;line-height:19.75px;font-size:15px;color:#111;text-align:center;">26.58</div>
<div class="t" style="left:1305.5px;top:402.35px;width:77.5px;height:19.75px;line-height:19.75px;font-size:15px;color:#111;text-align:center;">26.58</div>
<div class="t" style="left:848.5px;top:422.1px;width:85.5px;height:19.75px;line-height:19.75px;font-size:15px;color:#111;text-align:center;">2ZB34</div>
<div class="t" style="left:934px;top:422.1px;width:109.5px;height:19.75px;line-height:19.75px;font-size:15px;color:#111;text-align:center;">PL35*410</div>
<div class="t" style="left:1043.5px;top:422.1px;width:61.0px;height:19.75px;line-height:19.75px;font-size:15px;color:#111;text-align:center;">460</div>
<div class="t" style="left:1104.5px;top:422.1px;width:70.0px;height:19.75px;line-height:19.75px;font-size:15px;color:#111;text-align:center;">Q355B</div>
<div class="t" style="left:1174.5px;top:422.1px;width:54.0px;height:19.75px;line-height:19.75px;font-size:15px;color:#111;text-align:center;">4</div>
<div class="t" style="left:1228.5px;top:422.1px;width:77.0px;height:19.75px;line-height:19.75px;font-size:15px;color:#111;text-align:center;">51.82</div>
<div class="t" style="left:1305.5px;top:422.1px;width:77.5px;height:19.75px;line-height:19.75px;font-size:15px;color:#111;text-align:center;">207.27</div>
<div class="t" style="left:848.5px;top:441.85px;width:85.5px;height:19.75px;line-height:19.75px;font-size:15px;color:#111;text-align:center;">2ZB44</div>
<div class="t" style="left:934px;top:441.85px;width:109.5px;height:19.75px;line-height:19.75px;font-size:15px;color:#111;text-align:center;">PL40*410</div>
<div class="t" style="left:1043.5px;top:441.85px;width:61.0px;height:19.75px;line-height:19.75px;font-size:15px;color:#111;text-align:center;">460</div>
<div class="t" style="left:1104.5px;top:441.85px;width:70.0px;height:19.75px;line-height:19.75px;font-size:15px;color:#111;text-align:center;">Q355B</div>
<div class="t" style="left:1174.5px;top:441.85px;width:54.0px;height:19.75px;line-height:19.75px;font-size:15px;color:#111;text-align:center;">1</div>
<div class="t" style="left:1228.5px;top:441.85px;width:77.0px;height:19.75px;line-height:19.75px;font-size:15px;color:#111;text-align:center;">59.22</div>
<div class="t" style="left:1305.5px;top:441.85px;width:77.5px;height:19.75px;line-height:19.75px;font-size:15px;color:#111;text-align:center;">59.22</div>
<div class="t" style="left:848.5px;top:461.6px;width:85.5px;height:19.75px;line-height:19.75px;font-size:15px;color:#111;text-align:center;">2ZB46</div>
<div class="t" style="left:934px;top:461.6px;width:109.5px;height:19.75px;line-height:19.75px;font-size:15px;color:#111;text-align:center;">PL40*460</div>
<div class="t" style="left:1043.5px;top:461.6px;width:61.0px;height:19.75px;line-height:19.75px;font-size:15px;color:#111;text-align:center;">460</div>
<div class="t" style="left:1104.5px;top:461.6px;width:70.0px;height:19.75px;line-height:19.75px;font-size:15px;color:#111;text-align:center;">Q355B</div>
<div class="t" style="left:1174.5px;top:461.6px;width:54.0px;height:19.75px;line-height:19.75px;font-size:15px;color:#111;text-align:center;">1</div>
<div class="t" style="left:1228.5px;top:461.6px;width:77.0px;height:19.75px;line-height:19.75px;font-size:15px;color:#111;text-align:center;">66.44</div>
<div class="t" style="left:1305.5px;top:461.6px;width:77.5px;height:19.75px;line-height:19.75px;font-size:15px;color:#111;text-align:center;">66.44</div>
<svg class="g" style="left:951.66px;top:481.85px;" width="74.18" height="19.75" role="img"><title>焊缝(1.5%)</title><g fill="#111"><text class="cs" x="0" y="15.07" font-size="15">焊缝</text><text x="30" y="15.07" font-size="15">(1.5%)</text></g></svg>
<div class="t" style="left:1305.5px;top:481.35px;width:77.5px;height:19.75px;line-height:19.75px;font-size:15px;color:#111;text-align:center;">70.32</div>
<svg class="g" style="left:876.25px;top:502.1px;" width="30" height="19.75" role="img"><title>螺栓</title><g fill="#111"><text class="cs" x="0" y="15.07" font-size="15">螺栓</text></g></svg>
<div class="t" style="left:934px;top:501.1px;width:109.5px;height:19.75px;line-height:19.75px;font-size:15px;color:#111;text-align:center;">M24X90</div>
<div class="t" style="left:1104.5px;top:501.1px;width:70.0px;height:19.75px;line-height:19.75px;font-size:15px;color:#111;text-align:center;">HS10.9</div>
<div class="t" style="left:1174.5px;top:501.1px;width:54.0px;height:19.75px;line-height:19.75px;font-size:15px;color:#111;text-align:center;">12</div>
<div style="left:1400px;top:163.5px;width:13px;height:585.5px;background:#f2f2f2;"></div>
<div style="left:1403.5px;top:189px;width:6.5px;height:535px;background:#c9c9c9;border-radius:3.500px;"></div>
<svg style="left:1402px;top:167px;" width="10" height="16"><path d="M2.500 3.500h5" stroke="#999" stroke-width="1"/><path d="M5 10l2 3h-4z" fill="#777"/></svg>
<svg style="left:1402px;top:737px;" width="10" height="8"><path d="M3 2h4l-2 3z" fill="#777"/></svg>
<div style="left:1413px;top:112px;width:40px;height:671px;background:#efefef;"></div>
<div style="left:1413px;top:112px;width:1px;height:637px;background:#e3e3e3;"></div>
<div style="left:1429.5px;top:128.5px;width:10.5px;height:1.3px;background:#666;"></div>
<svg style="left:1427px;top:145px;" width="18" height="17"><path d="M2.500 2.500l11 4.500-4.500 1.800 4 4-1.500 1.500-4-4-1.800 4.500z" fill="none" stroke="#b7b7b7" stroke-width="1.100"/></svg>
<svg style="left:1427px;top:176px;" width="18" height="15"><g fill="none" stroke="#b7b7b7" stroke-width="1.100"><path d="M1.500 4h3M9 4h6M1.500 10.500h8M14 10.500h1.500"/><circle cx="6.500" cy="4" r="2"/><circle cx="12" cy="10.500" r="2"/></g></svg>
<svg style="left:1427px;top:206px;" width="18" height="16"><g fill="none" stroke="#b7b7b7" stroke-width="1.100"><path d="M1.500 2.500h11M1.500 2.500v11M4.500 13.500h9v-8M13.500 5.500l-2 2M13.500 5.500l2 2M4.500 13.500l2-2M4.500 13.500l2 2"/></g></svg>
<svg style="left:1427px;top:237px;" width="18" height="16"><g fill="none" stroke="#b7b7b7" stroke-width="1.100"><path d="M2 5q0-3 3-3h6q3 0 3 3M2 8v5h11"/><path d="M5 11c1-4 3-5 4-3s-2 4-2 1 4-3 5-1"/></g></svg>
<svg style="left:1427px;top:267px;" width="18" height="16"><g fill="none" stroke="#b7b7b7" stroke-width="1.100"><path d="M3 13l7.500-7.500 2 2-7.500 7.500zM11 3.500l1-2M14 6l2-.5M13.500 3l1.500-1.500"/></g></svg>
<svg style="left:1427px;top:297px;" width="18" height="16"><g fill="none" stroke="#b7b7b7" stroke-width="1.100"><path d="M2 3l4-1.500 4 1.500 4-1.500v5M2 3v10l4-1.500 2 .8M6 1.500v10"/><circle cx="11.500" cy="10.500" r="2.500"/><path d="M13.300 12.300l2 2"/></g></svg>
<svg style="left:1427px;top:327px;" width="18" height="18"><circle cx="8.500" cy="9" r="6.500" fill="none" stroke="#b7b7b7" stroke-width="1.100"/><text x="8.500" y="12.300" font-size="9" fill="#b7b7b7" text-anchor="middle" font-family="Liberation Sans,sans-serif">?</text></svg>
<svg style="left:1427px;top:362px;" width="18" height="6"><g fill="none" stroke="#b7b7b7" stroke-width=".9"><circle cx="4" cy="3" r="1.200"/><circle cx="8.500" cy="3" r="1.200"/><circle cx="13" cy="3" r="1.200"/></g></svg>
<div style="left:1449px;top:135px;width:4px;height:45px;background:linear-gradient(#7a8a80,#2fd36b 12%,#35d873 85%,#8fe3b0);border-radius:3px 0 0 3px;"></div>
<div style="left:1448.5px;top:728px;width:4.5px;height:45px;background:#26343a;border-radius:2px 0 0 2px;"></div>
<div style="left:1393px;top:497px;width:60px;height:37.5px;background:#fff;border-radius:6.500px 0 0 6.500px;box-shadow:0 0 3px rgba(0,0,0,.22);"></div>
<svg style="left:1402.5px;top:506px;" width="26" height="22"><path d="M19.600 2.700C13 .6 3.500 2.200 3.500 7.600c0 4.900 17.300 1.400 17.300 6.900 0 3.800-10.400 5-17.400 3.200" fill="none" stroke="#ee6b19" stroke-width="4.400"/></svg>
<div style="left:1436.8px;top:504.3px;width:1px;height:23.4px;background:#d4d4d4;"></div>
<div style="left:1450px;top:510.3px;width:3px;height:10.2px;background:#111;"></div>
<div style="left:728px;top:749px;width:685px;height:19px;background:#eeeeee;"></div>
<div style="left:728px;top:749px;width:672px;height:1px;background:#e0e0e0;"></div>
<div style="left:806px;top:749px;width:48.5px;height:18px;background:#fff;border-radius:0 0 5px 5px;"></div>
<div class="t" style="left:806px;top:751px;width:48.5px;height:15px;line-height:15px;font-size:9.5px;color:#0a7d5e;text-align:center;font-weight:bold;">Sheet1</div>
<svg style="left:738px;top:753px;" width="62" height="11"><g fill="none" stroke="#9c9c9c" stroke-width="1.400"><path d="M2.200 1.800v7.400M7.800 1.800l-3.600 3.700 3.600 3.700"/><path d="M23.500 1.500l-3.500 4 3.500 4"/><path d="M36.500 1.500l3.500 4-3.500 4"/><path d="M52 1.500l3.500 4-3.500 4M57.500 1.500v8"/></g></svg>
<svg style="left:858px;top:754px;" width="10" height="10"><path d="M5 1v8M1 5h8" stroke="#222" stroke-width="1.400"/></svg>
<div style="left:1149px;top:755px;width:189px;height:8px;background:#cdcdcd;border-radius:4px;"></div>
<svg style="left:1124px;top:754px;" width="20" height="10"><path d="M3.500 2v6" stroke="#aaa" stroke-width="1"/><path d="M17.500 2.500v5l-3.500-2.500z" fill="#666"/></svg>
<svg style="left:1380px;top:754px;" width="22" height="10"><path d="M4 2.500v5l3.500-2.500z" fill="#666"/><path d="M18 2v6" stroke="#aaa" stroke-width="1"/></svg>
<div style="left:728px;top:768px;width:725px;height:15px;background:#eeeeee;"></div>
<div style="left:728px;top:767.7px;width:685px;height:1px;background:#f5f5f5;"></div>
<svg style="left:740px;top:770px;" width="14" height="13"><g fill="none" stroke="#444" stroke-width="1"><path d="M3 3v7.500h6V3M1.500 3h9v2.500M9 10.500h1.500V8.500M3 10.500H1.500"/><path d="M5 1v3M7.500 1v3"/></g></svg>
<div style="left:762px;top:771px;width:1px;height:11px;background:#d6d6d6;"></div>
<svg style="left:773px;top:771px;" width="12" height="12"><g fill="none" stroke="#c2c2c2" stroke-width="1"><path d="M10 2.500h-8.500v9"/><path d="M5 6h5.500M5 8.500h5.500M5 11h5.500"/></g></svg>
<svg style="left:1097px;top:771px;" width="14" height="12"><path d="M1 6q6-7.500 12 0q-6 7.500-12 0z" fill="none" stroke="#444" stroke-width="1.100"/><circle cx="7" cy="6" r="1.800" fill="none" stroke="#444" stroke-width="1.100"/></svg>
<svg style="left:1123px;top:771px;" width="24" height="13"><g fill="none" stroke="#444" stroke-width="1.100"><rect x="4" y="4" width="5" height="5" rx="1"/><rect x="4.500" y=".8" width="4" height="3.200" rx="1"/><rect x="4.500" y="9" width="4" height="3.200" rx="1"/><rect x=".8" y="4.500" width="3.200" height="4" rx="1"/><rect x="9" y="4.500" width="3.200" height="4" rx="1"/><path d="M16.500 5.500l2 2 2-2"/></g></svg>
<div style="left:1155px;top:771px;width:1px;height:11px;background:#d6d6d6;"></div>
<div style="left:1162px;top:768px;width:18px;height:15px;background:#dedede;border-radius:2px;"></div>
<svg style="left:1165px;top:771px;" width="12" height="12"><g fill="none" stroke="#333" stroke-width="1.100"><rect x="1" y="1" width="10" height="10" rx="1"/><path d="M1 4.500h10M4.500 4.500v6.500"/></g></svg>
<svg style="left:1189px;top:771px;" width="12" height="12"><g fill="none" stroke="#333" stroke-width="1.100"><rect x="1" y="1" width="10" height="10" rx="1"/><path d="M6 1v10"/></g></svg>
<svg style="left:1214px;top:771px;" width="12" height="12"><g fill="none" stroke="#333" stroke-width="1.100"><path d="M1 4v7h8"/><rect x="3.500" y="1" width="7.500" height="7"/></g></svg>
<div style="left:1234.5px;top:771px;width:1px;height:11px;background:#d6d6d6;"></div>
<div class="t" style="left:1247px;top:770px;width:28px;height:14px;line-height:14px;font-size:9.4px;color:#333;text-align:left;">150%</div>
<svg style="left:1278px;top:775px;" width="9" height="6"><path d="M1.500 1.500l2.300 2.300 2.300-2.300" stroke="#444" stroke-width="1" fill="none"/></svg>
<div style="left:1298.5px;top:777px;width:9.5px;height:1.5px;background:#222;"></div>
<div style="left:1318px;top:777.2px;width:46px;height:1.2px;background:#2d62de;"></div>
<div style="left:1364px;top:777.2px;width:34px;height:1px;background:#c9c9c9;"></div>
<div style="left:1360.5px;top:774.5px;width:6.5px;height:6.5px;background:#fff;border:1px solid #b0b0b0;border-radius:50%;box-sizing:border-box;"></div>
<svg style="left:1409px;top:773px;" width="10" height="10"><path d="M5 1v8M1 5h8" stroke="#222" stroke-width="1.400"/></svg>
<svg style="left:1432px;top:771px;" width="13" height="13"><path d="M1 4.500v-3.500h3.500M8.500 1h3.500v3.500M12 8.500v3.500h-3.500M4.500 12h-3.500v-3.500" fill="none" stroke="#333" stroke-width="1.100"/></svg>
<svg style="left:0;top:0;" width="1453" height="793"><rect x="1.400" y="-0.400" width="578" height="19" rx="1.200" fill="none" stroke="#f94e50" stroke-width="3.200"/><rect x="25.300" y="88.300" width="639.300" height="499.200" rx="1.200" fill="none" stroke="#f94e50" stroke-width="3.200"/><rect x="732.500" y="-1" width="95.300" height="25.300" rx="1.500" fill="none" stroke="#f94e50" stroke-width="3"/><rect x="927.500" y="-1" width="94.300" height="25.300" rx="1.500" fill="none" stroke="#f94e50" stroke-width="3"/><polygon points="451.8,393.3 827.6,635.0 825.2,638.8 846.0,642.6 833.7,625.4 831.3,629.2 452.2,392.7" fill="#f94e50"/><polygon points="872.3,662.2 1048.2,366.9 1052.0,369.2 1055.1,348.3 1038.5,361.3 1042.3,363.5 871.7,661.8" fill="#f94e50"/></svg>
<svg class="g" style="left:665px;top:495px;" width="52.8" height="22" role="img"><title>原表格</title><g fill="#f94e50"><text class="cj" x="0" y="17.17" font-size="17.8" letter-spacing="-0.2">原表格</text></g></svg>
<svg class="g" style="left:939px;top:559.5px;" width="71.6" height="22" role="img"><title>提取效果</title><g fill="#f94e50"><text class="cj" x="0" y="17.2" font-size="17.9">提取效果</text></g></svg>
<div style="left:0px;top:783px;width:1453px;height:10px;background:#fcc89b;"></div>
</body></html>
